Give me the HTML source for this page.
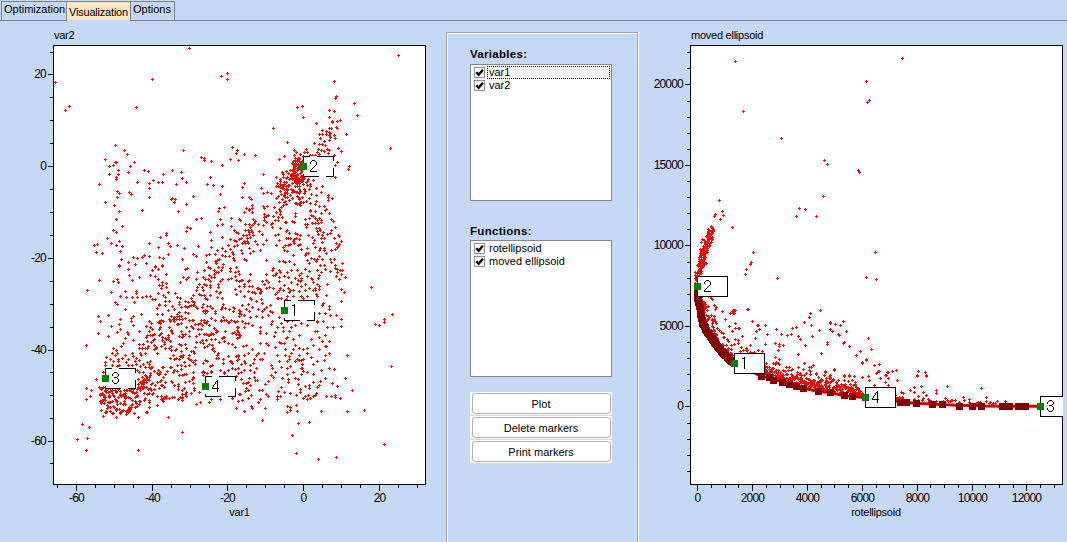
<!DOCTYPE html>
<html><head><meta charset="utf-8"><style>
html,body{margin:0;padding:0;}
body{width:1067px;height:542px;overflow:hidden;position:relative;background:#c5d9f6;font-family:"Liberation Sans",sans-serif;font-size:11px;color:#000}
.t{position:absolute;white-space:nowrap;line-height:13px}
svg.main{position:absolute;left:0;top:0}
</style></head><body>
<div style="position:absolute;left:0px;top:20px;width:1067px;height:1px;background:#808080"></div>
<div style="position:absolute;left:1px;top:1px;width:66px;height:20px;border:1px solid #808080;box-sizing:border-box;background:#c5d9f6"></div>
<div style="position:absolute;left:67px;top:1px;width:63px;height:19px;background:#fde6c6;border-top:1px solid #808080;box-sizing:border-box"></div>
<div style="position:absolute;left:67px;top:20px;width:63px;height:1px;background:#c5d9f6"></div>
<div style="position:absolute;left:130px;top:1px;width:45px;height:20px;border:1px solid #808080;box-sizing:border-box;background:#c5d9f6"></div>
<div class="t" style="left:4px;top:3px;">Optimization</div>
<div class="t" style="left:69px;top:6px;letter-spacing:-0.2px">Visualization</div>
<div class="t" style="left:133px;top:3px;">Options</div>
<div style="position:absolute;left:446px;top:32px;width:1px;height:520px;background:#a0a0a0"></div>
<div style="position:absolute;left:446px;top:32px;width:192px;height:1px;background:#a0a0a0"></div>
<div style="position:absolute;left:447px;top:33px;width:1px;height:520px;background:#fff"></div>
<div style="position:absolute;left:447px;top:33px;width:190px;height:1px;background:#fff"></div>
<div style="position:absolute;left:637px;top:32px;width:1px;height:520px;background:#a0a0a0"></div>
<div style="position:absolute;left:638px;top:32px;width:1px;height:520px;background:#fff"></div>
<div class="t" style="left:470px;top:48px;font-size:11.5px;letter-spacing:0.3px"><b>Variables:</b></div>
<div style="position:absolute;left:470px;top:64px;width:142px;height:137px;background:#fff;border:1px solid #828790;box-sizing:border-box"></div>
<div class="t" style="left:470px;top:225px;font-size:11.5px;letter-spacing:0.3px"><b>Functions:</b></div>
<div style="position:absolute;left:470px;top:240px;width:142px;height:137px;background:#fff;border:1px solid #828790;box-sizing:border-box"></div>
<div style="position:absolute;left:474px;top:67px;width:11px;height:11px;border:1px solid #8f8f8f;box-sizing:border-box;background:#fff"></div>
<svg style="position:absolute;left:474px;top:67px" width="11" height="11"><path d="M2.3 5.2 L4.7 7.8 L8.9 2.8" stroke="#000" stroke-width="2.4" fill="none"/></svg>
<div class="t" style="left:489px;top:66px;">var1</div>
<div style="position:absolute;left:474px;top:80px;width:11px;height:11px;border:1px solid #8f8f8f;box-sizing:border-box;background:#fff"></div>
<svg style="position:absolute;left:474px;top:80px" width="11" height="11"><path d="M2.3 5.2 L4.7 7.8 L8.9 2.8" stroke="#000" stroke-width="2.4" fill="none"/></svg>
<div class="t" style="left:489px;top:79px;">var2</div>
<div style="position:absolute;left:487px;top:66px;width:123px;height:13px;border:1px dotted #000;box-sizing:border-box"></div>
<div style="position:absolute;left:474px;top:243px;width:11px;height:11px;border:1px solid #8f8f8f;box-sizing:border-box;background:#fff"></div>
<svg style="position:absolute;left:474px;top:243px" width="11" height="11"><path d="M2.3 5.2 L4.7 7.8 L8.9 2.8" stroke="#000" stroke-width="2.4" fill="none"/></svg>
<div class="t" style="left:489px;top:242px;">rotellipsoid</div>
<div style="position:absolute;left:474px;top:256px;width:11px;height:11px;border:1px solid #8f8f8f;box-sizing:border-box;background:#fff"></div>
<svg style="position:absolute;left:474px;top:256px" width="11" height="11"><path d="M2.3 5.2 L4.7 7.8 L8.9 2.8" stroke="#000" stroke-width="2.4" fill="none"/></svg>
<div class="t" style="left:489px;top:255px;">moved ellipsoid</div>
<div style="position:absolute;left:470px;top:392px;width:142px;height:23px;background:#fff"></div>
<div style="position:absolute;left:472px;top:393px;width:139px;height:21px;border:1px solid #b0b0b0;border-radius:3px;box-sizing:border-box;background:#fff"></div>
<div class="t" style="left:470px;top:398px;width:142px;text-align:center">Plot</div>
<div style="position:absolute;left:470px;top:416px;width:142px;height:23px;background:#fff"></div>
<div style="position:absolute;left:472px;top:417px;width:139px;height:21px;border:1px solid #b0b0b0;border-radius:3px;box-sizing:border-box;background:#fff"></div>
<div class="t" style="left:470px;top:422px;width:142px;text-align:center">Delete markers</div>
<div style="position:absolute;left:470px;top:440px;width:142px;height:23px;background:#fff"></div>
<div style="position:absolute;left:472px;top:441px;width:139px;height:21px;border:1px solid #b0b0b0;border-radius:3px;box-sizing:border-box;background:#fff"></div>
<div class="t" style="left:470px;top:446px;width:142px;text-align:center">Print markers</div>
<div class="t" style="left:-74px;top:435px;width:120px;text-align:right;font-size:12px;letter-spacing:-0.8px">-60</div>
<div class="t" style="left:-74px;top:344px;width:120px;text-align:right;font-size:12px;letter-spacing:-0.8px">-40</div>
<div class="t" style="left:-74px;top:252px;width:120px;text-align:right;font-size:12px;letter-spacing:-0.8px">-20</div>
<div class="t" style="left:-74px;top:160px;width:120px;text-align:right;font-size:12px;letter-spacing:-0.8px">0</div>
<div class="t" style="left:-74px;top:68px;width:120px;text-align:right;font-size:12px;letter-spacing:-0.8px">20</div>
<div class="t" style="left:16.5px;top:492px;width:120px;text-align:center;font-size:12px;letter-spacing:-0.8px">-60</div>
<div class="t" style="left:92.5px;top:492px;width:120px;text-align:center;font-size:12px;letter-spacing:-0.8px">-40</div>
<div class="t" style="left:167.5px;top:492px;width:120px;text-align:center;font-size:12px;letter-spacing:-0.8px">-20</div>
<div class="t" style="left:243.5px;top:492px;width:120px;text-align:center;font-size:12px;letter-spacing:-0.8px">0</div>
<div class="t" style="left:319.5px;top:492px;width:120px;text-align:center;font-size:12px;letter-spacing:-0.8px">20</div>
<div class="t" style="left:54px;top:29px;font-size:11px;letter-spacing:-0.25px">var2</div>
<div class="t" style="left:179.5px;top:506px;width:120px;text-align:center;font-size:11px;letter-spacing:-0.25px">var1</div>
<div class="t" style="left:563px;top:400px;width:120px;text-align:right;font-size:12px;letter-spacing:-0.8px">0</div>
<div class="t" style="left:563px;top:320px;width:120px;text-align:right;font-size:12px;letter-spacing:-0.8px">5000</div>
<div class="t" style="left:563px;top:239px;width:120px;text-align:right;font-size:12px;letter-spacing:-0.8px">10000</div>
<div class="t" style="left:563px;top:159px;width:120px;text-align:right;font-size:12px;letter-spacing:-0.8px">15000</div>
<div class="t" style="left:563px;top:78px;width:120px;text-align:right;font-size:12px;letter-spacing:-0.8px">20000</div>
<div class="t" style="left:637.5px;top:492px;width:120px;text-align:center;font-size:12px;letter-spacing:-0.8px">0</div>
<div class="t" style="left:692.5px;top:492px;width:120px;text-align:center;font-size:12px;letter-spacing:-0.8px">2000</div>
<div class="t" style="left:747.5px;top:492px;width:120px;text-align:center;font-size:12px;letter-spacing:-0.8px">4000</div>
<div class="t" style="left:802.5px;top:492px;width:120px;text-align:center;font-size:12px;letter-spacing:-0.8px">6000</div>
<div class="t" style="left:857.5px;top:492px;width:120px;text-align:center;font-size:12px;letter-spacing:-0.8px">8000</div>
<div class="t" style="left:912.5px;top:492px;width:120px;text-align:center;font-size:12px;letter-spacing:-0.8px">10000</div>
<div class="t" style="left:966.5px;top:492px;width:120px;text-align:center;font-size:12px;letter-spacing:-0.8px">12000</div>
<div class="t" style="left:691px;top:29px;font-size:11px;letter-spacing:-0.25px">moved ellipsoid</div>
<div class="t" style="left:816px;top:506px;width:120px;text-align:center;font-size:11px;letter-spacing:-0.25px">rotellipsoid</div>
<svg class="main" width="1067" height="542" shape-rendering="crispEdges"><defs><clipPath id="rclip"><rect x="690" y="45" width="373" height="440"/></clipPath></defs>
<rect x="53" y="45" width="373" height="440" fill="#fff"/>
<rect x="690" y="45" width="373" height="440" fill="#fff"/>
<rect x="50" y="463" width="3" height="1" fill="#000"/>
<rect x="48" y="441" width="5" height="1" fill="#000"/>
<rect x="50" y="418" width="3" height="1" fill="#000"/>
<rect x="50" y="395" width="3" height="1" fill="#000"/>
<rect x="50" y="372" width="3" height="1" fill="#000"/>
<rect x="48" y="350" width="5" height="1" fill="#000"/>
<rect x="50" y="327" width="3" height="1" fill="#000"/>
<rect x="50" y="304" width="3" height="1" fill="#000"/>
<rect x="50" y="281" width="3" height="1" fill="#000"/>
<rect x="48" y="258" width="5" height="1" fill="#000"/>
<rect x="50" y="235" width="3" height="1" fill="#000"/>
<rect x="50" y="212" width="3" height="1" fill="#000"/>
<rect x="50" y="189" width="3" height="1" fill="#000"/>
<rect x="48" y="166" width="5" height="1" fill="#000"/>
<rect x="50" y="143" width="3" height="1" fill="#000"/>
<rect x="50" y="120" width="3" height="1" fill="#000"/>
<rect x="50" y="97" width="3" height="1" fill="#000"/>
<rect x="48" y="74" width="5" height="1" fill="#000"/>
<rect x="50" y="52" width="3" height="1" fill="#000"/>
<rect x="57" y="485" width="1" height="3" fill="#000"/>
<rect x="76" y="485" width="1" height="6" fill="#000"/>
<rect x="95" y="485" width="1" height="3" fill="#000"/>
<rect x="114" y="485" width="1" height="3" fill="#000"/>
<rect x="133" y="485" width="1" height="3" fill="#000"/>
<rect x="152" y="485" width="1" height="6" fill="#000"/>
<rect x="171" y="485" width="1" height="3" fill="#000"/>
<rect x="190" y="485" width="1" height="3" fill="#000"/>
<rect x="209" y="485" width="1" height="3" fill="#000"/>
<rect x="227" y="485" width="1" height="6" fill="#000"/>
<rect x="246" y="485" width="1" height="3" fill="#000"/>
<rect x="265" y="485" width="1" height="3" fill="#000"/>
<rect x="284" y="485" width="1" height="3" fill="#000"/>
<rect x="303" y="485" width="1" height="6" fill="#000"/>
<rect x="322" y="485" width="1" height="3" fill="#000"/>
<rect x="341" y="485" width="1" height="3" fill="#000"/>
<rect x="360" y="485" width="1" height="3" fill="#000"/>
<rect x="379" y="485" width="1" height="6" fill="#000"/>
<rect x="398" y="485" width="1" height="3" fill="#000"/>
<rect x="417" y="485" width="1" height="3" fill="#000"/>
<rect x="687" y="471" width="3" height="1" fill="#000"/>
<rect x="687" y="455" width="3" height="1" fill="#000"/>
<rect x="687" y="439" width="3" height="1" fill="#000"/>
<rect x="687" y="423" width="3" height="1" fill="#000"/>
<rect x="685" y="406" width="5" height="1" fill="#000"/>
<rect x="687" y="390" width="3" height="1" fill="#000"/>
<rect x="687" y="374" width="3" height="1" fill="#000"/>
<rect x="687" y="358" width="3" height="1" fill="#000"/>
<rect x="687" y="342" width="3" height="1" fill="#000"/>
<rect x="685" y="326" width="5" height="1" fill="#000"/>
<rect x="687" y="310" width="3" height="1" fill="#000"/>
<rect x="687" y="294" width="3" height="1" fill="#000"/>
<rect x="687" y="278" width="3" height="1" fill="#000"/>
<rect x="687" y="262" width="3" height="1" fill="#000"/>
<rect x="685" y="245" width="5" height="1" fill="#000"/>
<rect x="687" y="229" width="3" height="1" fill="#000"/>
<rect x="687" y="213" width="3" height="1" fill="#000"/>
<rect x="687" y="197" width="3" height="1" fill="#000"/>
<rect x="687" y="181" width="3" height="1" fill="#000"/>
<rect x="685" y="165" width="5" height="1" fill="#000"/>
<rect x="687" y="149" width="3" height="1" fill="#000"/>
<rect x="687" y="133" width="3" height="1" fill="#000"/>
<rect x="687" y="117" width="3" height="1" fill="#000"/>
<rect x="687" y="101" width="3" height="1" fill="#000"/>
<rect x="685" y="84" width="5" height="1" fill="#000"/>
<rect x="687" y="68" width="3" height="1" fill="#000"/>
<rect x="687" y="52" width="3" height="1" fill="#000"/>
<rect x="697" y="485" width="1" height="6" fill="#000"/>
<rect x="711" y="485" width="1" height="3" fill="#000"/>
<rect x="725" y="485" width="1" height="3" fill="#000"/>
<rect x="738" y="485" width="1" height="3" fill="#000"/>
<rect x="752" y="485" width="1" height="6" fill="#000"/>
<rect x="766" y="485" width="1" height="3" fill="#000"/>
<rect x="780" y="485" width="1" height="3" fill="#000"/>
<rect x="793" y="485" width="1" height="3" fill="#000"/>
<rect x="807" y="485" width="1" height="6" fill="#000"/>
<rect x="821" y="485" width="1" height="3" fill="#000"/>
<rect x="834" y="485" width="1" height="3" fill="#000"/>
<rect x="848" y="485" width="1" height="3" fill="#000"/>
<rect x="862" y="485" width="1" height="6" fill="#000"/>
<rect x="876" y="485" width="1" height="3" fill="#000"/>
<rect x="889" y="485" width="1" height="3" fill="#000"/>
<rect x="903" y="485" width="1" height="3" fill="#000"/>
<rect x="917" y="485" width="1" height="6" fill="#000"/>
<rect x="930" y="485" width="1" height="3" fill="#000"/>
<rect x="944" y="485" width="1" height="3" fill="#000"/>
<rect x="958" y="485" width="1" height="3" fill="#000"/>
<rect x="972" y="485" width="1" height="6" fill="#000"/>
<rect x="985" y="485" width="1" height="3" fill="#000"/>
<rect x="999" y="485" width="1" height="3" fill="#000"/>
<rect x="1013" y="485" width="1" height="3" fill="#000"/>
<rect x="1026" y="485" width="1" height="6" fill="#000"/>
<rect x="1040" y="485" width="1" height="3" fill="#000"/>
<rect x="1054" y="485" width="1" height="3" fill="#000"/>
<path fill="#f00" d="M54 82h3v1h-3zM55 81h1v3h-1zM64 110h3v1h-3zM65 109h1v3h-1zM68 106h3v1h-3zM69 105h1v3h-1zM135 107h3v1h-3zM136 106h1v3h-1zM114 145h3v1h-3zM115 144h1v3h-1zM123 150h3v1h-3zM124 149h1v3h-1zM126 154h3v1h-3zM127 153h1v3h-1zM188 48h3v1h-3zM189 47h1v3h-1zM151 79h3v1h-3zM152 78h1v3h-1zM220 76h3v1h-3zM221 75h1v3h-1zM226 73h3v1h-3zM227 72h1v3h-1zM226 79h3v1h-3zM227 78h1v3h-1zM182 150h3v1h-3zM183 149h1v3h-1zM231 147h3v1h-3zM232 146h1v3h-1zM236 150h3v1h-3zM237 149h1v3h-1zM235 153h3v1h-3zM236 152h1v3h-1zM296 107h3v1h-3zM297 106h1v3h-1zM301 106h3v1h-3zM302 105h1v3h-1zM302 117h3v1h-3zM303 116h1v3h-1zM328 110h3v1h-3zM329 109h1v3h-1zM328 117h3v1h-3zM329 116h1v3h-1zM315 123h3v1h-3zM316 122h1v3h-1zM272 128h3v1h-3zM273 127h1v3h-1zM286 142h3v1h-3zM287 141h1v3h-1zM243 154h3v1h-3zM244 153h1v3h-1zM254 155h3v1h-3zM255 154h1v3h-1zM331 121h3v1h-3zM332 120h1v3h-1zM397 55h3v1h-3zM398 54h1v3h-1zM333 81h3v1h-3zM334 80h1v3h-1zM335 96h3v1h-3zM336 95h1v3h-1zM334 98h3v1h-3zM335 97h1v3h-1zM353 103h3v1h-3zM354 102h1v3h-1zM333 111h3v1h-3zM334 110h1v3h-1zM356 115h3v1h-3zM357 114h1v3h-1zM336 121h3v1h-3zM337 120h1v3h-1zM339 120h3v1h-3zM340 119h1v3h-1zM335 127h3v1h-3zM336 126h1v3h-1zM336 128h3v1h-3zM337 127h1v3h-1zM333 135h3v1h-3zM334 134h1v3h-1zM334 138h3v1h-3zM335 137h1v3h-1zM345 134h3v1h-3zM346 133h1v3h-1zM337 148h3v1h-3zM338 147h1v3h-1zM340 151h3v1h-3zM341 150h1v3h-1zM389 148h3v1h-3zM390 147h1v3h-1zM333 155h3v1h-3zM334 154h1v3h-1zM104 159h3v1h-3zM105 158h1v3h-1zM108 166h3v1h-3zM109 165h1v3h-1zM112 165h3v1h-3zM113 164h1v3h-1zM114 162h3v1h-3zM115 161h1v3h-1zM115 162h3v1h-3zM116 161h1v3h-1zM129 166h3v1h-3zM130 165h1v3h-1zM133 162h3v1h-3zM134 161h1v3h-1zM117 170h3v1h-3zM118 169h1v3h-1zM108 174h3v1h-3zM109 173h1v3h-1zM117 174h3v1h-3zM118 173h1v3h-1zM127 172h3v1h-3zM128 171h1v3h-1zM143 170h3v1h-3zM144 169h1v3h-1zM115 177h3v1h-3zM116 176h1v3h-1zM115 179h3v1h-3zM116 178h1v3h-1zM98 184h3v1h-3zM99 183h1v3h-1zM136 182h3v1h-3zM137 181h1v3h-1zM116 191h3v1h-3zM117 190h1v3h-1zM118 193h3v1h-3zM119 192h1v3h-1zM128 192h3v1h-3zM129 191h1v3h-1zM130 194h3v1h-3zM131 193h1v3h-1zM116 197h3v1h-3zM117 196h1v3h-1zM104 202h3v1h-3zM105 201h1v3h-1zM113 205h3v1h-3zM114 204h1v3h-1zM118 211h3v1h-3zM119 210h1v3h-1zM141 210h3v1h-3zM142 209h1v3h-1zM115 219h3v1h-3zM116 218h1v3h-1zM121 226h3v1h-3zM122 225h1v3h-1zM112 230h3v1h-3zM113 229h1v3h-1zM115 232h3v1h-3zM116 231h1v3h-1zM106 238h3v1h-3zM107 237h1v3h-1zM110 243h3v1h-3zM111 242h1v3h-1zM118 241h3v1h-3zM119 240h1v3h-1zM96 244h3v1h-3zM97 243h1v3h-1zM93 245h3v1h-3zM94 244h1v3h-1zM115 245h3v1h-3zM116 244h1v3h-1zM121 246h3v1h-3zM122 245h1v3h-1zM95 252h3v1h-3zM96 251h1v3h-1zM101 253h3v1h-3zM102 252h1v3h-1zM119 251h3v1h-3zM120 250h1v3h-1zM120 259h3v1h-3zM121 258h1v3h-1zM132 257h3v1h-3zM133 256h1v3h-1zM136 258h3v1h-3zM137 257h1v3h-1zM141 257h3v1h-3zM142 256h1v3h-1zM143 255h3v1h-3zM144 254h1v3h-1zM127 262h3v1h-3zM128 261h1v3h-1zM134 264h3v1h-3zM135 263h1v3h-1zM118 265h3v1h-3zM119 264h1v3h-1zM145 263h3v1h-3zM146 262h1v3h-1zM200 157h3v1h-3zM201 156h1v3h-1zM203 158h3v1h-3zM204 157h1v3h-1zM203 160h3v1h-3zM204 159h1v3h-1zM210 161h3v1h-3zM211 160h1v3h-1zM229 159h3v1h-3zM230 158h1v3h-1zM237 160h3v1h-3zM238 159h1v3h-1zM221 165h3v1h-3zM222 164h1v3h-1zM147 171h3v1h-3zM148 170h1v3h-1zM171 170h3v1h-3zM172 169h1v3h-1zM180 172h3v1h-3zM181 171h1v3h-1zM162 174h3v1h-3zM163 173h1v3h-1zM209 177h3v1h-3zM210 176h1v3h-1zM181 178h3v1h-3zM182 177h1v3h-1zM152 180h3v1h-3zM153 179h1v3h-1zM157 182h3v1h-3zM158 181h1v3h-1zM161 182h3v1h-3zM162 181h1v3h-1zM148 183h3v1h-3zM149 182h1v3h-1zM175 184h3v1h-3zM176 183h1v3h-1zM185 182h3v1h-3zM186 181h1v3h-1zM206 184h3v1h-3zM207 183h1v3h-1zM212 185h3v1h-3zM213 184h1v3h-1zM221 186h3v1h-3zM222 185h1v3h-1zM148 188h3v1h-3zM149 187h1v3h-1zM219 194h3v1h-3zM220 193h1v3h-1zM148 197h3v1h-3zM149 196h1v3h-1zM192 196h3v1h-3zM193 195h1v3h-1zM170 199h3v1h-3zM171 198h1v3h-1zM171 198h3v1h-3zM172 197h1v3h-1zM174 199h3v1h-3zM175 198h1v3h-1zM173 202h3v1h-3zM174 201h1v3h-1zM185 204h3v1h-3zM186 203h1v3h-1zM218 208h3v1h-3zM219 207h1v3h-1zM223 207h3v1h-3zM224 206h1v3h-1zM217 211h3v1h-3zM218 210h1v3h-1zM177 211h3v1h-3zM178 210h1v3h-1zM195 219h3v1h-3zM196 218h1v3h-1zM200 218h3v1h-3zM201 217h1v3h-1zM219 219h3v1h-3zM220 218h1v3h-1zM230 218h3v1h-3zM231 217h1v3h-1zM238 219h3v1h-3zM239 218h1v3h-1zM216 225h3v1h-3zM217 224h1v3h-1zM221 224h3v1h-3zM222 223h1v3h-1zM230 226h3v1h-3zM231 225h1v3h-1zM186 227h3v1h-3zM187 226h1v3h-1zM189 228h3v1h-3zM190 227h1v3h-1zM185 231h3v1h-3zM186 230h1v3h-1zM233 230h3v1h-3zM234 229h1v3h-1zM235 232h3v1h-3zM236 231h1v3h-1zM237 233h3v1h-3zM238 232h1v3h-1zM209 232h3v1h-3zM210 231h1v3h-1zM165 233h3v1h-3zM166 232h1v3h-1zM165 235h3v1h-3zM166 234h1v3h-1zM159 237h3v1h-3zM160 236h1v3h-1zM221 237h3v1h-3zM222 236h1v3h-1zM229 239h3v1h-3zM230 238h1v3h-1zM233 240h3v1h-3zM234 239h1v3h-1zM235 241h3v1h-3zM236 240h1v3h-1zM238 239h3v1h-3zM239 238h1v3h-1zM148 243h3v1h-3zM149 242h1v3h-1zM167 243h3v1h-3zM168 242h1v3h-1zM210 240h3v1h-3zM211 239h1v3h-1zM169 246h3v1h-3zM170 245h1v3h-1zM176 245h3v1h-3zM177 244h1v3h-1zM197 246h3v1h-3zM198 245h1v3h-1zM157 247h3v1h-3zM158 246h1v3h-1zM183 248h3v1h-3zM184 247h1v3h-1zM210 247h3v1h-3zM211 246h1v3h-1zM227 245h3v1h-3zM228 244h1v3h-1zM233 246h3v1h-3zM234 245h1v3h-1zM236 245h3v1h-3zM237 244h1v3h-1zM221 248h3v1h-3zM222 247h1v3h-1zM229 249h3v1h-3zM230 248h1v3h-1zM216 250h3v1h-3zM217 249h1v3h-1zM224 251h3v1h-3zM225 250h1v3h-1zM231 252h3v1h-3zM232 251h1v3h-1zM232 254h3v1h-3zM233 253h1v3h-1zM148 256h3v1h-3zM149 255h1v3h-1zM167 254h3v1h-3zM168 253h1v3h-1zM192 254h3v1h-3zM193 253h1v3h-1zM195 256h3v1h-3zM196 255h1v3h-1zM205 255h3v1h-3zM206 254h1v3h-1zM208 254h3v1h-3zM209 253h1v3h-1zM214 254h3v1h-3zM215 253h1v3h-1zM221 255h3v1h-3zM222 254h1v3h-1zM224 256h3v1h-3zM225 255h1v3h-1zM228 256h3v1h-3zM229 255h1v3h-1zM232 258h3v1h-3zM233 257h1v3h-1zM233 260h3v1h-3zM234 259h1v3h-1zM158 257h3v1h-3zM159 256h1v3h-1zM162 258h3v1h-3zM163 257h1v3h-1zM181 259h3v1h-3zM182 258h1v3h-1zM205 262h3v1h-3zM206 261h1v3h-1zM214 261h3v1h-3zM215 260h1v3h-1zM216 260h3v1h-3zM217 259h1v3h-1zM218 259h3v1h-3zM219 258h1v3h-1zM215 263h3v1h-3zM216 262h1v3h-1zM222 264h3v1h-3zM223 263h1v3h-1zM161 265h3v1h-3zM162 264h1v3h-1zM154 266h3v1h-3zM155 265h1v3h-1zM278 159h3v1h-3zM279 158h1v3h-1zM283 156h3v1h-3zM284 155h1v3h-1zM262 174h3v1h-3zM263 173h1v3h-1zM243 183h3v1h-3zM244 182h1v3h-1zM241 187h3v1h-3zM242 186h1v3h-1zM260 188h3v1h-3zM261 187h1v3h-1zM262 193h3v1h-3zM263 192h1v3h-1zM266 192h3v1h-3zM267 191h1v3h-1zM270 193h3v1h-3zM271 192h1v3h-1zM241 197h3v1h-3zM242 196h1v3h-1zM248 197h3v1h-3zM249 196h1v3h-1zM250 199h3v1h-3zM251 198h1v3h-1zM251 205h3v1h-3zM252 204h1v3h-1zM245 208h3v1h-3zM246 207h1v3h-1zM248 209h3v1h-3zM249 208h1v3h-1zM251 208h3v1h-3zM252 207h1v3h-1zM262 206h3v1h-3zM263 205h1v3h-1zM263 208h3v1h-3zM264 207h1v3h-1zM266 206h3v1h-3zM267 205h1v3h-1zM273 207h3v1h-3zM274 206h1v3h-1zM281 172h3v1h-3zM282 171h1v3h-1zM282 174h3v1h-3zM283 173h1v3h-1zM285 171h3v1h-3zM286 170h1v3h-1zM275 177h3v1h-3zM276 176h1v3h-1zM279 179h3v1h-3zM280 178h1v3h-1zM282 177h3v1h-3zM283 176h1v3h-1zM285 178h3v1h-3zM286 177h1v3h-1zM279 181h3v1h-3zM280 180h1v3h-1zM276 183h3v1h-3zM277 182h1v3h-1zM283 182h3v1h-3zM284 181h1v3h-1zM279 184h3v1h-3zM280 183h1v3h-1zM275 186h3v1h-3zM276 185h1v3h-1zM277 186h3v1h-3zM278 185h1v3h-1zM279 187h3v1h-3zM280 186h1v3h-1zM281 185h3v1h-3zM282 184h1v3h-1zM281 188h3v1h-3zM282 187h1v3h-1zM283 189h3v1h-3zM284 188h1v3h-1zM279 191h3v1h-3zM280 190h1v3h-1zM284 192h3v1h-3zM285 191h1v3h-1zM277 196h3v1h-3zM278 195h1v3h-1zM280 194h3v1h-3zM281 193h1v3h-1zM283 195h3v1h-3zM284 194h1v3h-1zM275 198h3v1h-3zM276 197h1v3h-1zM281 199h3v1h-3zM282 198h1v3h-1zM284 197h3v1h-3zM285 196h1v3h-1zM278 202h3v1h-3zM279 201h1v3h-1zM283 202h3v1h-3zM284 201h1v3h-1zM282 205h3v1h-3zM283 204h1v3h-1zM280 207h3v1h-3zM281 206h1v3h-1zM278 209h3v1h-3zM279 208h1v3h-1zM285 204h3v1h-3zM286 203h1v3h-1zM284 201h3v1h-3zM285 200h1v3h-1zM285 186h3v1h-3zM286 185h1v3h-1zM283 184h3v1h-3zM284 183h1v3h-1zM312 180h3v1h-3zM313 179h1v3h-1zM321 186h3v1h-3zM322 185h1v3h-1zM315 188h3v1h-3zM316 187h1v3h-1zM320 192h3v1h-3zM321 191h1v3h-1zM327 195h3v1h-3zM328 194h1v3h-1zM327 197h3v1h-3zM328 196h1v3h-1zM331 198h3v1h-3zM332 197h1v3h-1zM327 200h3v1h-3zM328 199h1v3h-1zM315 201h3v1h-3zM316 200h1v3h-1zM323 206h3v1h-3zM324 205h1v3h-1zM318 206h3v1h-3zM319 205h1v3h-1zM325 209h3v1h-3zM326 208h1v3h-1zM314 204h3v1h-3zM315 203h1v3h-1zM309 203h3v1h-3zM310 202h1v3h-1zM315 195h3v1h-3zM316 194h1v3h-1zM310 194h3v1h-3zM311 193h1v3h-1zM308 198h3v1h-3zM309 197h1v3h-1zM305 201h3v1h-3zM306 200h1v3h-1zM300 202h3v1h-3zM301 201h1v3h-1zM297 197h3v1h-3zM298 196h1v3h-1zM291 198h3v1h-3zM292 197h1v3h-1zM289 195h3v1h-3zM290 194h1v3h-1zM288 200h3v1h-3zM289 199h1v3h-1zM286 193h3v1h-3zM287 192h1v3h-1zM293 191h3v1h-3zM294 190h1v3h-1zM298 193h3v1h-3zM299 192h1v3h-1zM303 189h3v1h-3zM304 188h1v3h-1zM306 185h3v1h-3zM307 184h1v3h-1zM309 186h3v1h-3zM310 185h1v3h-1zM302 184h3v1h-3zM303 183h1v3h-1zM300 181h3v1h-3zM301 180h1v3h-1zM295 181h3v1h-3zM296 180h1v3h-1zM291 183h3v1h-3zM292 182h1v3h-1zM287 185h3v1h-3zM288 184h1v3h-1zM309 210h3v1h-3zM310 209h1v3h-1zM305 182h3v1h-3zM306 181h1v3h-1zM307 179h3v1h-3zM308 178h1v3h-1zM298 186h3v1h-3zM299 185h1v3h-1zM294 186h3v1h-3zM295 185h1v3h-1zM290 189h3v1h-3zM291 188h1v3h-1zM288 179h3v1h-3zM289 178h1v3h-1zM285 182h3v1h-3zM286 181h1v3h-1zM301 197h3v1h-3zM302 196h1v3h-1zM296 204h3v1h-3zM297 203h1v3h-1zM299 205h3v1h-3zM300 204h1v3h-1zM291 175h3v1h-3zM292 174h1v3h-1zM287 173h3v1h-3zM288 172h1v3h-1zM286 177h3v1h-3zM287 176h1v3h-1zM289 170h3v1h-3zM290 169h1v3h-1zM243 212h3v1h-3zM244 211h1v3h-1zM251 212h3v1h-3zM252 211h1v3h-1zM248 210h3v1h-3zM249 209h1v3h-1zM263 214h3v1h-3zM264 213h1v3h-1zM263 217h3v1h-3zM264 216h1v3h-1zM265 216h3v1h-3zM266 215h1v3h-1zM267 215h3v1h-3zM268 214h1v3h-1zM263 220h3v1h-3zM264 219h1v3h-1zM265 222h3v1h-3zM266 221h1v3h-1zM262 225h3v1h-3zM263 224h1v3h-1zM275 212h3v1h-3zM276 211h1v3h-1zM272 216h3v1h-3zM273 215h1v3h-1zM277 217h3v1h-3zM278 216h1v3h-1zM279 211h3v1h-3zM280 210h1v3h-1zM279 214h3v1h-3zM280 213h1v3h-1zM281 217h3v1h-3zM282 216h1v3h-1zM274 220h3v1h-3zM275 219h1v3h-1zM277 220h3v1h-3zM278 219h1v3h-1zM271 223h3v1h-3zM272 222h1v3h-1zM270 224h3v1h-3zM271 223h1v3h-1zM271 227h3v1h-3zM272 226h1v3h-1zM284 222h3v1h-3zM285 221h1v3h-1zM279 228h3v1h-3zM280 227h1v3h-1zM285 231h3v1h-3zM286 230h1v3h-1zM252 219h3v1h-3zM253 218h1v3h-1zM254 221h3v1h-3zM255 220h1v3h-1zM253 223h3v1h-3zM254 222h1v3h-1zM251 225h3v1h-3zM252 224h1v3h-1zM248 224h3v1h-3zM249 223h1v3h-1zM244 224h3v1h-3zM245 223h1v3h-1zM257 224h3v1h-3zM258 223h1v3h-1zM249 227h3v1h-3zM250 226h1v3h-1zM244 230h3v1h-3zM245 229h1v3h-1zM247 230h3v1h-3zM248 229h1v3h-1zM250 230h3v1h-3zM251 229h1v3h-1zM248 232h3v1h-3zM249 231h1v3h-1zM251 232h3v1h-3zM252 231h1v3h-1zM242 235h3v1h-3zM243 234h1v3h-1zM245 235h3v1h-3zM246 234h1v3h-1zM248 234h3v1h-3zM249 233h1v3h-1zM252 235h3v1h-3zM253 234h1v3h-1zM246 238h3v1h-3zM247 237h1v3h-1zM249 237h3v1h-3zM250 236h1v3h-1zM240 238h3v1h-3zM241 237h1v3h-1zM243 241h3v1h-3zM244 240h1v3h-1zM246 241h3v1h-3zM247 240h1v3h-1zM241 243h3v1h-3zM242 242h1v3h-1zM244 243h3v1h-3zM245 242h1v3h-1zM247 243h3v1h-3zM248 242h1v3h-1zM258 231h3v1h-3zM259 230h1v3h-1zM261 234h3v1h-3zM262 233h1v3h-1zM254 241h3v1h-3zM255 240h1v3h-1zM256 244h3v1h-3zM257 243h1v3h-1zM265 240h3v1h-3zM266 239h1v3h-1zM262 244h3v1h-3zM263 243h1v3h-1zM275 245h3v1h-3zM276 244h1v3h-1zM274 235h3v1h-3zM275 234h1v3h-1zM277 234h3v1h-3zM278 233h1v3h-1zM278 240h3v1h-3zM279 239h1v3h-1zM285 238h3v1h-3zM286 237h1v3h-1zM284 245h3v1h-3zM285 244h1v3h-1zM282 247h3v1h-3zM283 246h1v3h-1zM283 250h3v1h-3zM284 249h1v3h-1zM248 248h3v1h-3zM249 247h1v3h-1zM252 251h3v1h-3zM253 250h1v3h-1zM259 250h3v1h-3zM260 249h1v3h-1zM240 250h3v1h-3zM241 249h1v3h-1zM241 253h3v1h-3zM242 252h1v3h-1zM249 253h3v1h-3zM250 252h1v3h-1zM243 259h3v1h-3zM244 258h1v3h-1zM245 260h3v1h-3zM246 259h1v3h-1zM265 260h3v1h-3zM266 259h1v3h-1zM278 261h3v1h-3zM279 260h1v3h-1zM282 261h3v1h-3zM283 260h1v3h-1zM284 262h3v1h-3zM285 261h1v3h-1zM239 220h3v1h-3zM240 219h1v3h-1zM294 213h3v1h-3zM295 212h1v3h-1zM294 216h3v1h-3zM295 215h1v3h-1zM291 221h3v1h-3zM292 220h1v3h-1zM293 222h3v1h-3zM294 221h1v3h-1zM285 222h3v1h-3zM286 221h1v3h-1zM304 219h3v1h-3zM305 218h1v3h-1zM304 224h3v1h-3zM305 223h1v3h-1zM306 224h3v1h-3zM307 223h1v3h-1zM305 227h3v1h-3zM306 226h1v3h-1zM309 211h3v1h-3zM310 210h1v3h-1zM314 211h3v1h-3zM315 210h1v3h-1zM320 213h3v1h-3zM321 212h1v3h-1zM328 213h3v1h-3zM329 212h1v3h-1zM324 210h3v1h-3zM325 209h1v3h-1zM310 215h3v1h-3zM311 214h1v3h-1zM312 216h3v1h-3zM313 215h1v3h-1zM308 218h3v1h-3zM309 217h1v3h-1zM314 218h3v1h-3zM315 217h1v3h-1zM316 220h3v1h-3zM317 219h1v3h-1zM318 218h3v1h-3zM319 217h1v3h-1zM320 220h3v1h-3zM321 219h1v3h-1zM311 223h3v1h-3zM312 222h1v3h-1zM314 223h3v1h-3zM315 222h1v3h-1zM317 223h3v1h-3zM318 222h1v3h-1zM320 222h3v1h-3zM321 221h1v3h-1zM315 228h3v1h-3zM316 227h1v3h-1zM318 228h3v1h-3zM319 227h1v3h-1zM316 231h3v1h-3zM317 230h1v3h-1zM319 230h3v1h-3zM320 229h1v3h-1zM322 232h3v1h-3zM323 231h1v3h-1zM317 234h3v1h-3zM318 233h1v3h-1zM321 235h3v1h-3zM322 234h1v3h-1zM320 238h3v1h-3zM321 237h1v3h-1zM323 238h3v1h-3zM324 237h1v3h-1zM330 230h3v1h-3zM331 229h1v3h-1zM329 233h3v1h-3zM330 232h1v3h-1zM326 234h3v1h-3zM327 233h1v3h-1zM330 219h3v1h-3zM331 218h1v3h-1zM286 230h3v1h-3zM287 229h1v3h-1zM288 233h3v1h-3zM289 232h1v3h-1zM294 233h3v1h-3zM295 232h1v3h-1zM296 234h3v1h-3zM297 233h1v3h-1zM299 235h3v1h-3zM300 234h1v3h-1zM287 238h3v1h-3zM288 237h1v3h-1zM289 238h3v1h-3zM290 237h1v3h-1zM293 239h3v1h-3zM294 238h1v3h-1zM295 238h3v1h-3zM296 237h1v3h-1zM298 239h3v1h-3zM299 238h1v3h-1zM292 241h3v1h-3zM293 240h1v3h-1zM289 244h3v1h-3zM290 243h1v3h-1zM287 245h3v1h-3zM288 244h1v3h-1zM293 243h3v1h-3zM294 242h1v3h-1zM297 245h3v1h-3zM298 244h1v3h-1zM299 244h3v1h-3zM300 243h1v3h-1zM307 235h3v1h-3zM308 234h1v3h-1zM311 237h3v1h-3zM312 236h1v3h-1zM313 240h3v1h-3zM314 239h1v3h-1zM312 243h3v1h-3zM313 242h1v3h-1zM321 242h3v1h-3zM322 241h1v3h-1zM300 249h3v1h-3zM301 248h1v3h-1zM306 248h3v1h-3zM307 247h1v3h-1zM314 247h3v1h-3zM315 246h1v3h-1zM319 248h3v1h-3zM320 247h1v3h-1zM323 248h3v1h-3zM324 247h1v3h-1zM323 250h3v1h-3zM324 249h1v3h-1zM318 250h3v1h-3zM319 249h1v3h-1zM330 250h3v1h-3zM331 249h1v3h-1zM325 253h3v1h-3zM326 252h1v3h-1zM286 251h3v1h-3zM287 250h1v3h-1zM292 255h3v1h-3zM293 254h1v3h-1zM305 253h3v1h-3zM306 252h1v3h-1zM307 253h3v1h-3zM308 252h1v3h-1zM304 255h3v1h-3zM305 254h1v3h-1zM310 258h3v1h-3zM311 257h1v3h-1zM306 260h3v1h-3zM307 259h1v3h-1zM313 259h3v1h-3zM314 258h1v3h-1zM316 259h3v1h-3zM317 258h1v3h-1zM318 256h3v1h-3zM319 255h1v3h-1zM321 259h3v1h-3zM322 258h1v3h-1zM315 261h3v1h-3zM316 260h1v3h-1zM308 263h3v1h-3zM309 262h1v3h-1zM288 261h3v1h-3zM289 260h1v3h-1zM293 264h3v1h-3zM294 263h1v3h-1zM329 259h3v1h-3zM330 258h1v3h-1zM330 262h3v1h-3zM331 261h1v3h-1zM319 265h3v1h-3zM320 264h1v3h-1zM323 265h3v1h-3zM324 264h1v3h-1zM334 165h3v1h-3zM335 164h1v3h-1zM336 162h3v1h-3zM337 161h1v3h-1zM348 166h3v1h-3zM349 165h1v3h-1zM347 169h3v1h-3zM348 168h1v3h-1zM334 177h3v1h-3zM335 176h1v3h-1zM332 221h3v1h-3zM333 220h1v3h-1zM334 227h3v1h-3zM335 226h1v3h-1zM337 235h3v1h-3zM338 234h1v3h-1zM338 236h3v1h-3zM339 235h1v3h-1zM333 238h3v1h-3zM334 237h1v3h-1zM335 243h3v1h-3zM336 242h1v3h-1zM340 241h3v1h-3zM341 240h1v3h-1zM338 244h3v1h-3zM339 243h1v3h-1zM337 246h3v1h-3zM338 245h1v3h-1zM336 247h3v1h-3zM337 246h1v3h-1zM334 249h3v1h-3zM335 248h1v3h-1zM333 259h3v1h-3zM334 258h1v3h-1zM341 263h3v1h-3zM342 262h1v3h-1zM334 265h3v1h-3zM335 264h1v3h-1zM118 266h3v1h-3zM119 265h1v3h-1zM127 269h3v1h-3zM128 268h1v3h-1zM128 275h3v1h-3zM129 274h1v3h-1zM138 277h3v1h-3zM139 276h1v3h-1zM98 280h3v1h-3zM99 279h1v3h-1zM112 281h3v1h-3zM113 280h1v3h-1zM116 279h3v1h-3zM117 278h1v3h-1zM117 282h3v1h-3zM118 281h1v3h-1zM131 280h3v1h-3zM132 279h1v3h-1zM86 290h3v1h-3zM87 289h1v3h-1zM110 292h3v1h-3zM111 291h1v3h-1zM124 291h3v1h-3zM125 290h1v3h-1zM135 291h3v1h-3zM136 290h1v3h-1zM135 293h3v1h-3zM136 292h1v3h-1zM119 296h3v1h-3zM120 295h1v3h-1zM125 297h3v1h-3zM126 296h1v3h-1zM131 297h3v1h-3zM132 296h1v3h-1zM136 297h3v1h-3zM137 296h1v3h-1zM141 297h3v1h-3zM142 296h1v3h-1zM145 296h3v1h-3zM146 295h1v3h-1zM114 302h3v1h-3zM115 301h1v3h-1zM116 304h3v1h-3zM117 303h1v3h-1zM133 302h3v1h-3zM134 301h1v3h-1zM124 309h3v1h-3zM125 308h1v3h-1zM97 316h3v1h-3zM98 315h1v3h-1zM107 315h3v1h-3zM108 314h1v3h-1zM99 321h3v1h-3zM100 320h1v3h-1zM132 316h3v1h-3zM133 315h1v3h-1zM130 318h3v1h-3zM131 317h1v3h-1zM130 321h3v1h-3zM131 320h1v3h-1zM140 314h3v1h-3zM141 313h1v3h-1zM119 319h3v1h-3zM120 318h1v3h-1zM118 324h3v1h-3zM119 323h1v3h-1zM110 326h3v1h-3zM111 325h1v3h-1zM132 325h3v1h-3zM133 324h1v3h-1zM145 326h3v1h-3zM146 325h1v3h-1zM119 329h3v1h-3zM120 328h1v3h-1zM116 332h3v1h-3zM117 331h1v3h-1zM126 332h3v1h-3zM127 331h1v3h-1zM127 334h3v1h-3zM128 333h1v3h-1zM138 331h3v1h-3zM139 330h1v3h-1zM97 333h3v1h-3zM98 332h1v3h-1zM107 336h3v1h-3zM108 335h1v3h-1zM124 338h3v1h-3zM125 337h1v3h-1zM132 340h3v1h-3zM133 339h1v3h-1zM145 337h3v1h-3zM146 336h1v3h-1zM85 345h3v1h-3zM86 344h1v3h-1zM122 343h3v1h-3zM123 342h1v3h-1zM120 346h3v1h-3zM121 345h1v3h-1zM138 344h3v1h-3zM139 343h1v3h-1zM142 344h3v1h-3zM143 343h1v3h-1zM138 348h3v1h-3zM139 347h1v3h-1zM141 348h3v1h-3zM142 347h1v3h-1zM144 348h3v1h-3zM145 347h1v3h-1zM112 348h3v1h-3zM113 347h1v3h-1zM115 350h3v1h-3zM116 349h1v3h-1zM111 353h3v1h-3zM112 352h1v3h-1zM116 353h3v1h-3zM117 352h1v3h-1zM114 355h3v1h-3zM115 354h1v3h-1zM124 355h3v1h-3zM125 354h1v3h-1zM131 353h3v1h-3zM132 352h1v3h-1zM132 356h3v1h-3zM133 355h1v3h-1zM139 353h3v1h-3zM140 352h1v3h-1zM140 355h3v1h-3zM141 354h1v3h-1zM144 353h3v1h-3zM145 352h1v3h-1zM105 357h3v1h-3zM106 356h1v3h-1zM109 359h3v1h-3zM110 358h1v3h-1zM117 359h3v1h-3zM118 358h1v3h-1zM121 358h3v1h-3zM122 357h1v3h-1zM127 359h3v1h-3zM128 358h1v3h-1zM135 358h3v1h-3zM136 357h1v3h-1zM104 362h3v1h-3zM105 361h1v3h-1zM112 361h3v1h-3zM113 360h1v3h-1zM117 361h3v1h-3zM118 360h1v3h-1zM125 362h3v1h-3zM126 361h1v3h-1zM134 361h3v1h-3zM135 360h1v3h-1zM138 360h3v1h-3zM139 359h1v3h-1zM104 365h3v1h-3zM105 364h1v3h-1zM111 365h3v1h-3zM112 364h1v3h-1zM116 366h3v1h-3zM117 365h1v3h-1zM118 365h3v1h-3zM119 364h1v3h-1zM127 365h3v1h-3zM128 364h1v3h-1zM131 365h3v1h-3zM132 364h1v3h-1zM135 364h3v1h-3zM136 363h1v3h-1zM139 366h3v1h-3zM140 365h1v3h-1zM142 364h3v1h-3zM143 363h1v3h-1zM144 367h3v1h-3zM145 366h1v3h-1zM136 370h3v1h-3zM137 369h1v3h-1zM138 372h3v1h-3zM139 371h1v3h-1zM142 372h3v1h-3zM143 371h1v3h-1zM144 375h3v1h-3zM145 374h1v3h-1zM102 372h3v1h-3zM103 371h1v3h-1zM154 267h3v1h-3zM155 266h1v3h-1zM161 266h3v1h-3zM162 265h1v3h-1zM151 270h3v1h-3zM152 269h1v3h-1zM157 269h3v1h-3zM158 268h1v3h-1zM149 275h3v1h-3zM150 274h1v3h-1zM154 276h3v1h-3zM155 275h1v3h-1zM165 274h3v1h-3zM166 273h1v3h-1zM157 279h3v1h-3zM158 278h1v3h-1zM161 282h3v1h-3zM162 281h1v3h-1zM158 285h3v1h-3zM159 284h1v3h-1zM161 285h3v1h-3zM162 284h1v3h-1zM165 283h3v1h-3zM166 282h1v3h-1zM160 288h3v1h-3zM161 287h1v3h-1zM165 287h3v1h-3zM166 286h1v3h-1zM184 269h3v1h-3zM185 268h1v3h-1zM186 268h3v1h-3zM187 267h1v3h-1zM182 277h3v1h-3zM183 276h1v3h-1zM187 277h3v1h-3zM188 276h1v3h-1zM185 279h3v1h-3zM186 278h1v3h-1zM179 282h3v1h-3zM180 281h1v3h-1zM157 293h3v1h-3zM158 292h1v3h-1zM167 292h3v1h-3zM168 291h1v3h-1zM174 293h3v1h-3zM175 292h1v3h-1zM149 296h3v1h-3zM150 295h1v3h-1zM151 299h3v1h-3zM152 298h1v3h-1zM154 299h3v1h-3zM155 298h1v3h-1zM162 295h3v1h-3zM163 294h1v3h-1zM164 297h3v1h-3zM165 296h1v3h-1zM164 301h3v1h-3zM165 300h1v3h-1zM168 301h3v1h-3zM169 300h1v3h-1zM176 297h3v1h-3zM177 296h1v3h-1zM179 298h3v1h-3zM180 297h1v3h-1zM178 302h3v1h-3zM179 301h1v3h-1zM178 304h3v1h-3zM179 303h1v3h-1zM184 301h3v1h-3zM185 300h1v3h-1zM187 302h3v1h-3zM188 301h1v3h-1zM190 298h3v1h-3zM191 297h1v3h-1zM192 295h3v1h-3zM193 294h1v3h-1zM191 301h3v1h-3zM192 300h1v3h-1zM158 304h3v1h-3zM159 303h1v3h-1zM158 305h3v1h-3zM159 304h1v3h-1zM164 305h3v1h-3zM165 304h1v3h-1zM156 308h3v1h-3zM157 307h1v3h-1zM167 310h3v1h-3zM168 309h1v3h-1zM171 306h3v1h-3zM172 305h1v3h-1zM173 309h3v1h-3zM174 308h1v3h-1zM180 307h3v1h-3zM181 306h1v3h-1zM184 306h3v1h-3zM185 305h1v3h-1zM186 307h3v1h-3zM187 306h1v3h-1zM188 306h3v1h-3zM189 305h1v3h-1zM190 305h3v1h-3zM191 304h1v3h-1zM192 305h3v1h-3zM193 304h1v3h-1zM156 314h3v1h-3zM157 313h1v3h-1zM161 314h3v1h-3zM162 313h1v3h-1zM184 312h3v1h-3zM185 311h1v3h-1zM187 313h3v1h-3zM188 312h1v3h-1zM170 316h3v1h-3zM171 315h1v3h-1zM173 317h3v1h-3zM174 316h1v3h-1zM176 314h3v1h-3zM177 313h1v3h-1zM178 312h3v1h-3zM179 311h1v3h-1zM176 316h3v1h-3zM177 315h1v3h-1zM178 316h3v1h-3zM179 315h1v3h-1zM180 316h3v1h-3zM181 315h1v3h-1zM168 319h3v1h-3zM169 318h1v3h-1zM172 319h3v1h-3zM173 318h1v3h-1zM175 319h3v1h-3zM176 318h1v3h-1zM178 319h3v1h-3zM179 318h1v3h-1zM181 319h3v1h-3zM182 318h1v3h-1zM184 318h3v1h-3zM185 317h1v3h-1zM160 320h3v1h-3zM161 319h1v3h-1zM188 320h3v1h-3zM189 319h1v3h-1zM191 320h3v1h-3zM192 319h1v3h-1zM207 267h3v1h-3zM208 266h1v3h-1zM209 268h3v1h-3zM210 267h1v3h-1zM217 267h3v1h-3zM218 266h1v3h-1zM221 267h3v1h-3zM222 266h1v3h-1zM229 268h3v1h-3zM230 267h1v3h-1zM235 267h3v1h-3zM236 266h1v3h-1zM203 270h3v1h-3zM204 269h1v3h-1zM196 272h3v1h-3zM197 271h1v3h-1zM213 270h3v1h-3zM214 269h1v3h-1zM215 272h3v1h-3zM216 271h1v3h-1zM213 274h3v1h-3zM214 273h1v3h-1zM217 272h3v1h-3zM218 271h1v3h-1zM220 270h3v1h-3zM221 269h1v3h-1zM229 271h3v1h-3zM230 270h1v3h-1zM234 272h3v1h-3zM235 271h1v3h-1zM237 271h3v1h-3zM238 270h1v3h-1zM238 274h3v1h-3zM239 273h1v3h-1zM202 277h3v1h-3zM203 276h1v3h-1zM204 279h3v1h-3zM205 278h1v3h-1zM208 275h3v1h-3zM209 274h1v3h-1zM210 277h3v1h-3zM211 276h1v3h-1zM207 279h3v1h-3zM208 278h1v3h-1zM209 281h3v1h-3zM210 280h1v3h-1zM213 277h3v1h-3zM214 276h1v3h-1zM195 279h3v1h-3zM196 278h1v3h-1zM221 279h3v1h-3zM222 278h1v3h-1zM219 281h3v1h-3zM220 280h1v3h-1zM227 279h3v1h-3zM228 278h1v3h-1zM230 278h3v1h-3zM231 277h1v3h-1zM234 276h3v1h-3zM235 275h1v3h-1zM235 280h3v1h-3zM236 279h1v3h-1zM238 281h3v1h-3zM239 280h1v3h-1zM198 284h3v1h-3zM199 283h1v3h-1zM203 284h3v1h-3zM204 283h1v3h-1zM205 285h3v1h-3zM206 284h1v3h-1zM201 287h3v1h-3zM202 286h1v3h-1zM196 287h3v1h-3zM197 286h1v3h-1zM195 290h3v1h-3zM196 289h1v3h-1zM202 290h3v1h-3zM203 289h1v3h-1zM209 285h3v1h-3zM210 284h1v3h-1zM209 287h3v1h-3zM210 286h1v3h-1zM217 284h3v1h-3zM218 283h1v3h-1zM217 287h3v1h-3zM218 286h1v3h-1zM215 291h3v1h-3zM216 290h1v3h-1zM218 293h3v1h-3zM219 292h1v3h-1zM219 292h3v1h-3zM220 291h1v3h-1zM234 289h3v1h-3zM235 288h1v3h-1zM238 286h3v1h-3zM239 285h1v3h-1zM235 294h3v1h-3zM236 293h1v3h-1zM192 295h3v1h-3zM193 294h1v3h-1zM198 294h3v1h-3zM199 293h1v3h-1zM200 295h3v1h-3zM201 294h1v3h-1zM203 295h3v1h-3zM204 294h1v3h-1zM204 298h3v1h-3zM205 297h1v3h-1zM206 299h3v1h-3zM207 298h1v3h-1zM209 295h3v1h-3zM210 294h1v3h-1zM216 297h3v1h-3zM217 296h1v3h-1zM221 298h3v1h-3zM222 297h1v3h-1zM193 302h3v1h-3zM194 301h1v3h-1zM193 305h3v1h-3zM194 304h1v3h-1zM195 307h3v1h-3zM196 306h1v3h-1zM196 308h3v1h-3zM197 307h1v3h-1zM202 304h3v1h-3zM203 303h1v3h-1zM201 307h3v1h-3zM202 306h1v3h-1zM206 306h3v1h-3zM207 305h1v3h-1zM209 306h3v1h-3zM210 305h1v3h-1zM211 308h3v1h-3zM212 307h1v3h-1zM204 310h3v1h-3zM205 309h1v3h-1zM202 311h3v1h-3zM203 310h1v3h-1zM206 311h3v1h-3zM207 310h1v3h-1zM204 313h3v1h-3zM205 312h1v3h-1zM214 311h3v1h-3zM215 310h1v3h-1zM214 313h3v1h-3zM215 312h1v3h-1zM222 304h3v1h-3zM223 303h1v3h-1zM221 307h3v1h-3zM222 306h1v3h-1zM224 308h3v1h-3zM225 307h1v3h-1zM228 309h3v1h-3zM229 308h1v3h-1zM220 309h3v1h-3zM221 308h1v3h-1zM232 307h3v1h-3zM233 306h1v3h-1zM233 308h3v1h-3zM234 307h1v3h-1zM232 311h3v1h-3zM233 310h1v3h-1zM238 310h3v1h-3zM239 309h1v3h-1zM238 313h3v1h-3zM239 312h1v3h-1zM222 317h3v1h-3zM223 316h1v3h-1zM210 318h3v1h-3zM211 317h1v3h-1zM203 320h3v1h-3zM204 319h1v3h-1zM214 320h3v1h-3zM215 319h1v3h-1zM223 320h3v1h-3zM224 319h1v3h-1zM225 320h3v1h-3zM226 319h1v3h-1zM230 320h3v1h-3zM231 319h1v3h-1zM192 320h3v1h-3zM193 319h1v3h-1zM238 316h3v1h-3zM239 315h1v3h-1zM328 128h3v1h-3zM329 127h1v3h-1zM330 128h3v1h-3zM331 127h1v3h-1zM321 130h3v1h-3zM322 129h1v3h-1zM325 131h3v1h-3zM326 130h1v3h-1zM328 132h3v1h-3zM329 131h1v3h-1zM329 133h3v1h-3zM330 132h1v3h-1zM318 134h3v1h-3zM319 133h1v3h-1zM321 134h3v1h-3zM322 133h1v3h-1zM325 134h3v1h-3zM326 133h1v3h-1zM328 135h3v1h-3zM329 134h1v3h-1zM329 137h3v1h-3zM330 136h1v3h-1zM319 138h3v1h-3zM320 137h1v3h-1zM323 141h3v1h-3zM324 140h1v3h-1zM328 140h3v1h-3zM329 139h1v3h-1zM313 143h3v1h-3zM314 142h1v3h-1zM318 144h3v1h-3zM319 143h1v3h-1zM321 144h3v1h-3zM322 143h1v3h-1zM324 145h3v1h-3zM325 144h1v3h-1zM326 149h3v1h-3zM327 148h1v3h-1zM328 150h3v1h-3zM329 149h1v3h-1zM327 153h3v1h-3zM328 152h1v3h-1zM317 149h3v1h-3zM318 148h1v3h-1zM320 150h3v1h-3zM321 149h1v3h-1zM323 151h3v1h-3zM324 150h1v3h-1zM316 152h3v1h-3zM317 151h1v3h-1zM318 154h3v1h-3zM319 153h1v3h-1zM314 155h3v1h-3zM315 154h1v3h-1zM311 155h3v1h-3zM312 154h1v3h-1zM309 155h3v1h-3zM310 154h1v3h-1zM305 149h3v1h-3zM306 148h1v3h-1zM306 152h3v1h-3zM307 151h1v3h-1zM303 152h3v1h-3zM304 151h1v3h-1zM299 154h3v1h-3zM300 153h1v3h-1zM293 150h3v1h-3zM294 149h1v3h-1zM295 152h3v1h-3zM296 151h1v3h-1zM293 155h3v1h-3zM294 154h1v3h-1zM302 156h3v1h-3zM303 155h1v3h-1zM331 122h3v1h-3zM332 121h1v3h-1zM249 274h3v1h-3zM250 273h1v3h-1zM271 270h3v1h-3zM272 269h1v3h-1zM278 270h3v1h-3zM279 269h1v3h-1zM278 277h3v1h-3zM279 276h1v3h-1zM286 272h3v1h-3zM287 271h1v3h-1zM287 277h3v1h-3zM288 276h1v3h-1zM296 270h3v1h-3zM297 269h1v3h-1zM300 273h3v1h-3zM301 272h1v3h-1zM304 269h3v1h-3zM305 268h1v3h-1zM308 271h3v1h-3zM309 270h1v3h-1zM316 270h3v1h-3zM317 269h1v3h-1zM320 272h3v1h-3zM321 271h1v3h-1zM324 269h3v1h-3zM325 268h1v3h-1zM329 271h3v1h-3zM330 270h1v3h-1zM306 276h3v1h-3zM307 275h1v3h-1zM310 278h3v1h-3zM311 277h1v3h-1zM300 280h3v1h-3zM301 279h1v3h-1zM294 278h3v1h-3zM295 277h1v3h-1zM290 282h3v1h-3zM291 281h1v3h-1zM296 284h3v1h-3zM297 283h1v3h-1zM300 286h3v1h-3zM301 285h1v3h-1zM304 284h3v1h-3zM305 283h1v3h-1zM312 282h3v1h-3zM313 281h1v3h-1zM318 286h3v1h-3zM319 285h1v3h-1zM314 290h3v1h-3zM315 289h1v3h-1zM308 288h3v1h-3zM309 287h1v3h-1zM304 290h3v1h-3zM305 289h1v3h-1zM298 291h3v1h-3zM299 290h1v3h-1zM292 290h3v1h-3zM293 289h1v3h-1zM288 292h3v1h-3zM289 291h1v3h-1zM282 290h3v1h-3zM283 289h1v3h-1zM286 296h3v1h-3zM287 295h1v3h-1zM292 296h3v1h-3zM293 295h1v3h-1zM300 296h3v1h-3zM301 295h1v3h-1zM306 296h3v1h-3zM307 295h1v3h-1zM316 296h3v1h-3zM317 295h1v3h-1zM274 294h3v1h-3zM275 293h1v3h-1zM276 298h3v1h-3zM277 297h1v3h-1zM280 298h3v1h-3zM281 297h1v3h-1zM241 280h3v1h-3zM242 279h1v3h-1zM247 281h3v1h-3zM248 280h1v3h-1zM261 281h3v1h-3zM262 280h1v3h-1zM263 284h3v1h-3zM264 283h1v3h-1zM243 286h3v1h-3zM244 285h1v3h-1zM251 286h3v1h-3zM252 285h1v3h-1zM257 288h3v1h-3zM258 287h1v3h-1zM265 288h3v1h-3zM266 287h1v3h-1zM247 291h3v1h-3zM248 290h1v3h-1zM253 292h3v1h-3zM254 291h1v3h-1zM259 292h3v1h-3zM260 291h1v3h-1zM243 296h3v1h-3zM244 295h1v3h-1zM249 298h3v1h-3zM250 297h1v3h-1zM255 301h3v1h-3zM256 300h1v3h-1zM261 303h3v1h-3zM262 302h1v3h-1zM247 304h3v1h-3zM248 303h1v3h-1zM241 305h3v1h-3zM242 304h1v3h-1zM251 307h3v1h-3zM252 306h1v3h-1zM245 309h3v1h-3zM246 308h1v3h-1zM239 311h3v1h-3zM240 310h1v3h-1zM257 309h3v1h-3zM258 308h1v3h-1zM263 309h3v1h-3zM264 308h1v3h-1zM265 307h3v1h-3zM266 306h1v3h-1zM269 305h3v1h-3zM270 304h1v3h-1zM269 311h3v1h-3zM270 310h1v3h-1zM243 315h3v1h-3zM244 314h1v3h-1zM249 317h3v1h-3zM250 316h1v3h-1zM255 316h3v1h-3zM256 315h1v3h-1zM261 317h3v1h-3zM262 316h1v3h-1zM267 315h3v1h-3zM268 314h1v3h-1zM271 321h3v1h-3zM272 320h1v3h-1zM241 321h3v1h-3zM242 320h1v3h-1zM247 323h3v1h-3zM248 322h1v3h-1zM243 327h3v1h-3zM244 326h1v3h-1zM251 325h3v1h-3zM252 324h1v3h-1zM259 327h3v1h-3zM260 326h1v3h-1zM276 327h3v1h-3zM277 326h1v3h-1zM278 317h3v1h-3zM279 316h1v3h-1zM280 323h3v1h-3zM281 322h1v3h-1zM282 327h3v1h-3zM283 326h1v3h-1zM321 305h3v1h-3zM322 304h1v3h-1zM328 309h3v1h-3zM329 308h1v3h-1zM324 313h3v1h-3zM325 312h1v3h-1zM318 313h3v1h-3zM319 312h1v3h-1zM329 315h3v1h-3zM330 314h1v3h-1zM316 321h3v1h-3zM317 320h1v3h-1zM322 321h3v1h-3zM323 320h1v3h-1zM326 327h3v1h-3zM327 326h1v3h-1zM314 331h3v1h-3zM315 330h1v3h-1zM306 325h3v1h-3zM307 324h1v3h-1zM300 323h3v1h-3zM301 322h1v3h-1zM294 325h3v1h-3zM295 324h1v3h-1zM290 327h3v1h-3zM291 326h1v3h-1zM288 331h3v1h-3zM289 330h1v3h-1zM282 331h3v1h-3zM283 330h1v3h-1zM259 331h3v1h-3zM260 330h1v3h-1zM265 333h3v1h-3zM266 332h1v3h-1zM239 335h3v1h-3zM240 334h1v3h-1zM286 337h3v1h-3zM287 336h1v3h-1zM292 339h3v1h-3zM293 338h1v3h-1zM298 335h3v1h-3zM299 334h1v3h-1zM310 339h3v1h-3zM311 338h1v3h-1zM318 337h3v1h-3zM319 336h1v3h-1zM324 335h3v1h-3zM325 334h1v3h-1zM328 341h3v1h-3zM329 340h1v3h-1zM259 343h3v1h-3zM260 342h1v3h-1zM265 343h3v1h-3zM266 342h1v3h-1zM245 345h3v1h-3zM246 344h1v3h-1zM280 343h3v1h-3zM281 342h1v3h-1zM294 345h3v1h-3zM295 344h1v3h-1zM312 345h3v1h-3zM313 344h1v3h-1zM274 347h3v1h-3zM275 346h1v3h-1zM284 349h3v1h-3zM285 348h1v3h-1zM292 349h3v1h-3zM293 348h1v3h-1zM302 349h3v1h-3zM303 348h1v3h-1zM318 349h3v1h-3zM319 348h1v3h-1zM251 349h3v1h-3zM252 348h1v3h-1zM247 353h3v1h-3zM248 352h1v3h-1zM255 355h3v1h-3zM256 354h1v3h-1zM253 359h3v1h-3zM254 358h1v3h-1zM259 359h3v1h-3zM260 358h1v3h-1zM263 353h3v1h-3zM264 352h1v3h-1zM276 355h3v1h-3zM277 354h1v3h-1zM284 355h3v1h-3zM285 354h1v3h-1zM290 353h3v1h-3zM291 352h1v3h-1zM298 355h3v1h-3zM299 354h1v3h-1zM306 353h3v1h-3zM307 352h1v3h-1zM310 357h3v1h-3zM311 356h1v3h-1zM324 355h3v1h-3zM325 354h1v3h-1zM328 353h3v1h-3zM329 352h1v3h-1zM278 361h3v1h-3zM279 360h1v3h-1zM286 361h3v1h-3zM287 360h1v3h-1zM294 361h3v1h-3zM295 360h1v3h-1zM302 359h3v1h-3zM303 358h1v3h-1zM316 361h3v1h-3zM317 360h1v3h-1zM243 361h3v1h-3zM244 360h1v3h-1zM249 365h3v1h-3zM250 364h1v3h-1zM243 370h3v1h-3zM244 369h1v3h-1zM249 370h3v1h-3zM250 369h1v3h-1zM253 372h3v1h-3zM254 371h1v3h-1zM271 368h3v1h-3zM272 367h1v3h-1zM274 372h3v1h-3zM275 371h1v3h-1zM286 368h3v1h-3zM287 367h1v3h-1zM292 372h3v1h-3zM293 371h1v3h-1zM300 368h3v1h-3zM301 367h1v3h-1zM306 372h3v1h-3zM307 371h1v3h-1zM312 374h3v1h-3zM313 373h1v3h-1zM320 370h3v1h-3zM321 369h1v3h-1zM328 368h3v1h-3zM329 367h1v3h-1zM300 374h3v1h-3zM301 373h1v3h-1zM334 268h3v1h-3zM335 267h1v3h-1zM336 269h3v1h-3zM337 268h1v3h-1zM339 270h3v1h-3zM340 269h1v3h-1zM341 270h3v1h-3zM342 269h1v3h-1zM336 272h3v1h-3zM337 271h1v3h-1zM340 274h3v1h-3zM341 273h1v3h-1zM335 276h3v1h-3zM336 275h1v3h-1zM338 279h3v1h-3zM339 278h1v3h-1zM344 277h3v1h-3zM345 276h1v3h-1zM370 287h3v1h-3zM371 286h1v3h-1zM340 289h3v1h-3zM341 288h1v3h-1zM343 292h3v1h-3zM344 291h1v3h-1zM340 301h3v1h-3zM341 300h1v3h-1zM335 315h3v1h-3zM336 314h1v3h-1zM340 319h3v1h-3zM341 318h1v3h-1zM340 326h3v1h-3zM341 325h1v3h-1zM332 327h3v1h-3zM333 326h1v3h-1zM391 314h3v1h-3zM392 313h1v3h-1zM383 319h3v1h-3zM384 318h1v3h-1zM383 322h3v1h-3zM384 321h1v3h-1zM374 324h3v1h-3zM375 323h1v3h-1zM378 325h3v1h-3zM379 324h1v3h-1zM346 355h3v1h-3zM347 354h1v3h-1zM390 366h3v1h-3zM391 365h1v3h-1zM333 369h3v1h-3zM334 368h1v3h-1zM95 379h3v1h-3zM96 378h1v3h-1zM85 388h3v1h-3zM86 387h1v3h-1zM90 390h3v1h-3zM91 389h1v3h-1zM89 396h3v1h-3zM90 395h1v3h-1zM85 399h3v1h-3zM86 398h1v3h-1zM98 387h3v1h-3zM99 386h1v3h-1zM100 410h3v1h-3zM101 409h1v3h-1zM105 412h3v1h-3zM106 411h1v3h-1zM102 416h3v1h-3zM103 415h1v3h-1zM112 413h3v1h-3zM113 412h1v3h-1zM115 417h3v1h-3zM116 416h1v3h-1zM127 412h3v1h-3zM128 411h1v3h-1zM133 413h3v1h-3zM134 412h1v3h-1zM137 417h3v1h-3zM138 416h1v3h-1zM145 412h3v1h-3zM146 411h1v3h-1zM138 404h3v1h-3zM139 403h1v3h-1zM81 424h3v1h-3zM82 423h1v3h-1zM88 427h3v1h-3zM89 426h1v3h-1zM76 439h3v1h-3zM77 438h1v3h-1zM86 438h3v1h-3zM87 437h1v3h-1zM85 450h3v1h-3zM86 449h1v3h-1zM137 450h3v1h-3zM138 449h1v3h-1zM148 402h3v1h-3zM149 401h1v3h-1zM148 407h3v1h-3zM149 406h1v3h-1zM156 405h3v1h-3zM157 404h1v3h-1zM146 412h3v1h-3zM147 411h1v3h-1zM167 417h3v1h-3zM168 416h1v3h-1zM181 432h3v1h-3zM182 431h1v3h-1zM195 404h3v1h-3zM196 403h1v3h-1zM199 402h3v1h-3zM200 401h1v3h-1zM208 402h3v1h-3zM209 401h1v3h-1zM210 399h3v1h-3zM211 398h1v3h-1zM219 399h3v1h-3zM220 398h1v3h-1zM235 408h3v1h-3zM236 407h1v3h-1zM237 401h3v1h-3zM238 400h1v3h-1zM238 394h3v1h-3zM239 393h1v3h-1zM231 398h3v1h-3zM232 397h1v3h-1zM193 390h3v1h-3zM194 389h1v3h-1zM198 392h3v1h-3zM199 391h1v3h-1zM240 379h3v1h-3zM241 378h1v3h-1zM242 383h3v1h-3zM243 382h1v3h-1zM245 383h3v1h-3zM246 382h1v3h-1zM247 382h3v1h-3zM248 381h1v3h-1zM248 378h3v1h-3zM249 377h1v3h-1zM253 377h3v1h-3zM254 376h1v3h-1zM256 380h3v1h-3zM257 379h1v3h-1zM254 380h3v1h-3zM255 379h1v3h-1zM249 385h3v1h-3zM250 384h1v3h-1zM245 388h3v1h-3zM246 387h1v3h-1zM247 390h3v1h-3zM248 389h1v3h-1zM244 391h3v1h-3zM245 390h1v3h-1zM239 394h3v1h-3zM240 393h1v3h-1zM241 400h3v1h-3zM242 399h1v3h-1zM247 398h3v1h-3zM248 397h1v3h-1zM250 395h3v1h-3zM251 394h1v3h-1zM257 402h3v1h-3zM258 401h1v3h-1zM259 399h3v1h-3zM260 398h1v3h-1zM258 390h3v1h-3zM259 389h1v3h-1zM261 390h3v1h-3zM262 389h1v3h-1zM264 384h3v1h-3zM265 383h1v3h-1zM267 381h3v1h-3zM268 380h1v3h-1zM265 394h3v1h-3zM266 393h1v3h-1zM267 396h3v1h-3zM268 395h1v3h-1zM272 377h3v1h-3zM273 376h1v3h-1zM281 378h3v1h-3zM282 377h1v3h-1zM287 379h3v1h-3zM288 378h1v3h-1zM287 382h3v1h-3zM288 381h1v3h-1zM294 378h3v1h-3zM295 377h1v3h-1zM297 379h3v1h-3zM298 378h1v3h-1zM297 384h3v1h-3zM298 383h1v3h-1zM299 389h3v1h-3zM300 388h1v3h-1zM299 392h3v1h-3zM300 391h1v3h-1zM304 386h3v1h-3zM305 385h1v3h-1zM308 385h3v1h-3zM309 384h1v3h-1zM308 388h3v1h-3zM309 387h1v3h-1zM312 382h3v1h-3zM313 381h1v3h-1zM316 387h3v1h-3zM317 386h1v3h-1zM318 385h3v1h-3zM319 384h1v3h-1zM319 381h3v1h-3zM320 380h1v3h-1zM324 378h3v1h-3zM325 377h1v3h-1zM331 383h3v1h-3zM332 382h1v3h-1zM280 387h3v1h-3zM281 386h1v3h-1zM277 391h3v1h-3zM278 390h1v3h-1zM283 392h3v1h-3zM284 391h1v3h-1zM289 393h3v1h-3zM290 392h1v3h-1zM276 396h3v1h-3zM277 395h1v3h-1zM279 396h3v1h-3zM280 395h1v3h-1zM276 399h3v1h-3zM277 398h1v3h-1zM295 395h3v1h-3zM296 394h1v3h-1zM302 398h3v1h-3zM303 397h1v3h-1zM304 396h3v1h-3zM305 395h1v3h-1zM307 395h3v1h-3zM308 394h1v3h-1zM309 398h3v1h-3zM310 397h1v3h-1zM312 396h3v1h-3zM313 395h1v3h-1zM314 395h3v1h-3zM315 394h1v3h-1zM315 393h3v1h-3zM316 392h1v3h-1zM306 399h3v1h-3zM307 398h1v3h-1zM325 396h3v1h-3zM326 395h1v3h-1zM330 396h3v1h-3zM331 395h1v3h-1zM250 406h3v1h-3zM251 405h1v3h-1zM251 408h3v1h-3zM252 407h1v3h-1zM264 408h3v1h-3zM265 407h1v3h-1zM243 411h3v1h-3zM244 410h1v3h-1zM286 406h3v1h-3zM287 405h1v3h-1zM289 407h3v1h-3zM290 406h1v3h-1zM289 410h3v1h-3zM290 409h1v3h-1zM286 412h3v1h-3zM287 411h1v3h-1zM295 405h3v1h-3zM296 404h1v3h-1zM296 411h3v1h-3zM297 410h1v3h-1zM320 411h3v1h-3zM321 410h1v3h-1zM261 420h3v1h-3zM262 419h1v3h-1zM297 423h3v1h-3zM298 422h1v3h-1zM308 422h3v1h-3zM309 421h1v3h-1zM291 435h3v1h-3zM292 434h1v3h-1zM295 453h3v1h-3zM296 452h1v3h-1zM317 459h3v1h-3zM318 458h1v3h-1zM344 378h3v1h-3zM345 377h1v3h-1zM336 386h3v1h-3zM337 385h1v3h-1zM351 390h3v1h-3zM352 389h1v3h-1zM334 395h3v1h-3zM335 394h1v3h-1zM334 397h3v1h-3zM335 396h1v3h-1zM339 398h3v1h-3zM340 397h1v3h-1zM346 411h3v1h-3zM347 410h1v3h-1zM363 410h3v1h-3zM364 409h1v3h-1zM383 444h3v1h-3zM384 443h1v3h-1zM335 457h3v1h-3zM336 456h1v3h-1zM294 161h3v1h-3zM295 160h1v3h-1zM298 159h3v1h-3zM299 158h1v3h-1zM297 167h3v1h-3zM298 166h1v3h-1zM295 179h3v1h-3zM296 178h1v3h-1zM298 183h3v1h-3zM299 182h1v3h-1zM297 168h3v1h-3zM298 167h1v3h-1zM303 158h3v1h-3zM304 157h1v3h-1zM301 165h3v1h-3zM302 164h1v3h-1zM293 179h3v1h-3zM294 178h1v3h-1zM292 173h3v1h-3zM293 172h1v3h-1zM298 167h3v1h-3zM299 166h1v3h-1zM297 159h3v1h-3zM298 158h1v3h-1zM299 169h3v1h-3zM300 168h1v3h-1zM293 173h3v1h-3zM294 172h1v3h-1zM295 165h3v1h-3zM296 164h1v3h-1zM300 176h3v1h-3zM301 175h1v3h-1zM292 173h3v1h-3zM293 172h1v3h-1zM296 181h3v1h-3zM297 180h1v3h-1zM299 165h3v1h-3zM300 164h1v3h-1zM303 160h3v1h-3zM304 159h1v3h-1zM295 177h3v1h-3zM296 176h1v3h-1zM291 170h3v1h-3zM292 169h1v3h-1zM300 172h3v1h-3zM301 171h1v3h-1zM301 165h3v1h-3zM302 164h1v3h-1zM299 173h3v1h-3zM300 172h1v3h-1zM297 169h3v1h-3zM298 168h1v3h-1zM296 175h3v1h-3zM297 174h1v3h-1zM290 176h3v1h-3zM291 175h1v3h-1zM301 165h3v1h-3zM302 164h1v3h-1zM294 175h3v1h-3zM295 174h1v3h-1zM290 178h3v1h-3zM291 177h1v3h-1zM294 181h3v1h-3zM295 180h1v3h-1zM297 181h3v1h-3zM298 180h1v3h-1zM300 180h3v1h-3zM301 179h1v3h-1zM293 168h3v1h-3zM294 167h1v3h-1zM294 181h3v1h-3zM295 180h1v3h-1zM302 161h3v1h-3zM303 160h1v3h-1zM291 163h3v1h-3zM292 162h1v3h-1zM292 170h3v1h-3zM293 169h1v3h-1zM297 164h3v1h-3zM298 163h1v3h-1zM294 172h3v1h-3zM295 171h1v3h-1zM302 176h3v1h-3zM303 175h1v3h-1zM296 174h3v1h-3zM297 173h1v3h-1zM298 158h3v1h-3zM299 157h1v3h-1zM302 178h3v1h-3zM303 177h1v3h-1zM301 179h3v1h-3zM302 178h1v3h-1zM294 168h3v1h-3zM295 167h1v3h-1zM290 174h3v1h-3zM291 173h1v3h-1zM292 161h3v1h-3zM293 160h1v3h-1zM294 158h3v1h-3zM295 157h1v3h-1zM298 161h3v1h-3zM299 160h1v3h-1zM293 166h3v1h-3zM294 165h1v3h-1zM294 160h3v1h-3zM295 159h1v3h-1zM296 170h3v1h-3zM297 169h1v3h-1zM294 164h3v1h-3zM295 163h1v3h-1zM301 161h3v1h-3zM302 160h1v3h-1zM296 161h3v1h-3zM297 160h1v3h-1zM297 158h3v1h-3zM298 157h1v3h-1zM296 183h3v1h-3zM297 182h1v3h-1zM301 176h3v1h-3zM302 175h1v3h-1zM293 167h3v1h-3zM294 166h1v3h-1zM291 178h3v1h-3zM292 177h1v3h-1zM296 178h3v1h-3zM297 177h1v3h-1zM294 163h3v1h-3zM295 162h1v3h-1zM301 179h3v1h-3zM302 178h1v3h-1zM300 177h3v1h-3zM301 176h1v3h-1zM292 171h3v1h-3zM293 170h1v3h-1zM294 158h3v1h-3zM295 157h1v3h-1zM293 176h3v1h-3zM294 175h1v3h-1zM302 169h3v1h-3zM303 168h1v3h-1zM302 167h3v1h-3zM303 166h1v3h-1zM292 163h3v1h-3zM293 162h1v3h-1zM292 163h3v1h-3zM293 162h1v3h-1zM298 181h3v1h-3zM299 180h1v3h-1zM301 170h3v1h-3zM302 169h1v3h-1zM298 179h3v1h-3zM299 178h1v3h-1zM290 175h3v1h-3zM291 174h1v3h-1zM302 178h3v1h-3zM303 177h1v3h-1zM300 170h3v1h-3zM301 169h1v3h-1zM291 178h3v1h-3zM292 177h1v3h-1zM294 179h3v1h-3zM295 178h1v3h-1zM303 168h3v1h-3zM304 167h1v3h-1zM295 183h3v1h-3zM296 182h1v3h-1zM299 162h3v1h-3zM300 161h1v3h-1zM302 179h3v1h-3zM303 178h1v3h-1zM291 179h3v1h-3zM292 178h1v3h-1zM303 175h3v1h-3zM304 174h1v3h-1zM294 172h3v1h-3zM295 171h1v3h-1zM303 175h3v1h-3zM304 174h1v3h-1zM296 182h3v1h-3zM297 181h1v3h-1zM295 181h3v1h-3zM296 180h1v3h-1zM301 163h3v1h-3zM302 162h1v3h-1zM293 165h3v1h-3zM294 164h1v3h-1zM292 173h3v1h-3zM293 172h1v3h-1zM293 168h3v1h-3zM294 167h1v3h-1zM292 190h3v1h-3zM293 189h1v3h-1zM299 202h3v1h-3zM300 201h1v3h-1zM294 203h3v1h-3zM295 202h1v3h-1zM296 192h3v1h-3zM297 191h1v3h-1zM297 178h3v1h-3zM298 177h1v3h-1zM294 182h3v1h-3zM295 181h1v3h-1zM286 190h3v1h-3zM287 189h1v3h-1zM303 193h3v1h-3zM304 192h1v3h-1zM291 192h3v1h-3zM292 191h1v3h-1zM298 199h3v1h-3zM299 198h1v3h-1zM284 193h3v1h-3zM285 192h1v3h-1zM288 185h3v1h-3zM289 184h1v3h-1zM304 191h3v1h-3zM305 190h1v3h-1zM298 198h3v1h-3zM299 197h1v3h-1zM308 189h3v1h-3zM309 188h1v3h-1zM299 191h3v1h-3zM300 190h1v3h-1zM296 196h3v1h-3zM297 195h1v3h-1zM295 192h3v1h-3zM296 191h1v3h-1zM295 203h3v1h-3zM296 202h1v3h-1zM302 202h3v1h-3zM303 201h1v3h-1zM309 184h3v1h-3zM310 183h1v3h-1zM298 203h3v1h-3zM299 202h1v3h-1zM306 181h3v1h-3zM307 180h1v3h-1zM285 189h3v1h-3zM286 188h1v3h-1zM283 184h3v1h-3zM284 183h1v3h-1zM283 196h3v1h-3zM284 195h1v3h-1zM286 197h3v1h-3zM287 196h1v3h-1zM301 181h3v1h-3zM302 180h1v3h-1zM293 191h3v1h-3zM294 190h1v3h-1zM286 189h3v1h-3zM287 188h1v3h-1zM296 186h3v1h-3zM297 185h1v3h-1zM287 186h3v1h-3zM288 185h1v3h-1zM303 178h3v1h-3zM304 177h1v3h-1zM298 189h3v1h-3zM299 188h1v3h-1zM282 186h3v1h-3zM283 185h1v3h-1zM175 349h3v1h-3zM176 348h1v3h-1zM149 375h3v1h-3zM150 374h1v3h-1zM183 374h3v1h-3zM184 373h1v3h-1zM151 335h3v1h-3zM152 334h1v3h-1zM148 364h3v1h-3zM149 363h1v3h-1zM159 327h3v1h-3zM160 326h1v3h-1zM166 371h3v1h-3zM167 370h1v3h-1zM184 334h3v1h-3zM185 333h1v3h-1zM153 371h3v1h-3zM154 370h1v3h-1zM173 359h3v1h-3zM174 358h1v3h-1zM150 323h3v1h-3zM151 322h1v3h-1zM178 344h3v1h-3zM179 343h1v3h-1zM149 373h3v1h-3zM150 372h1v3h-1zM176 365h3v1h-3zM177 364h1v3h-1zM150 368h3v1h-3zM151 367h1v3h-1zM149 368h3v1h-3zM150 367h1v3h-1zM167 339h3v1h-3zM168 338h1v3h-1zM172 372h3v1h-3zM173 371h1v3h-1zM159 327h3v1h-3zM160 326h1v3h-1zM171 333h3v1h-3zM172 332h1v3h-1zM151 329h3v1h-3zM152 328h1v3h-1zM148 331h3v1h-3zM149 330h1v3h-1zM161 337h3v1h-3zM162 336h1v3h-1zM182 336h3v1h-3zM183 335h1v3h-1zM170 330h3v1h-3zM171 329h1v3h-1zM162 321h3v1h-3zM163 320h1v3h-1zM158 321h3v1h-3zM159 320h1v3h-1zM180 351h3v1h-3zM181 350h1v3h-1zM155 347h3v1h-3zM156 346h1v3h-1zM190 326h3v1h-3zM191 325h1v3h-1zM184 344h3v1h-3zM185 343h1v3h-1zM169 367h3v1h-3zM170 366h1v3h-1zM164 348h3v1h-3zM165 347h1v3h-1zM178 375h3v1h-3zM179 374h1v3h-1zM162 367h3v1h-3zM163 366h1v3h-1zM179 356h3v1h-3zM180 355h1v3h-1zM165 339h3v1h-3zM166 338h1v3h-1zM149 327h3v1h-3zM150 326h1v3h-1zM149 361h3v1h-3zM150 360h1v3h-1zM158 329h3v1h-3zM159 328h1v3h-1zM150 367h3v1h-3zM151 366h1v3h-1zM187 358h3v1h-3zM188 357h1v3h-1zM159 334h3v1h-3zM160 333h1v3h-1zM160 346h3v1h-3zM161 345h1v3h-1zM153 345h3v1h-3zM154 344h1v3h-1zM158 374h3v1h-3zM159 373h1v3h-1zM192 351h3v1h-3zM193 350h1v3h-1zM157 374h3v1h-3zM158 373h1v3h-1zM161 340h3v1h-3zM162 339h1v3h-1zM146 341h3v1h-3zM147 340h1v3h-1zM168 348h3v1h-3zM169 347h1v3h-1zM155 348h3v1h-3zM156 347h1v3h-1zM146 335h3v1h-3zM147 334h1v3h-1zM150 342h3v1h-3zM151 341h1v3h-1zM148 321h3v1h-3zM149 320h1v3h-1zM160 333h3v1h-3zM161 332h1v3h-1zM174 350h3v1h-3zM175 349h1v3h-1zM181 357h3v1h-3zM182 356h1v3h-1zM180 369h3v1h-3zM181 368h1v3h-1zM164 338h3v1h-3zM165 337h1v3h-1zM192 328h3v1h-3zM193 327h1v3h-1zM180 356h3v1h-3zM181 355h1v3h-1zM148 367h3v1h-3zM149 366h1v3h-1zM188 355h3v1h-3zM189 354h1v3h-1zM180 365h3v1h-3zM181 364h1v3h-1zM153 349h3v1h-3zM154 348h1v3h-1zM170 367h3v1h-3zM171 366h1v3h-1zM184 366h3v1h-3zM185 365h1v3h-1zM173 370h3v1h-3zM174 369h1v3h-1zM178 359h3v1h-3zM179 358h1v3h-1zM157 322h3v1h-3zM158 321h1v3h-1zM152 340h3v1h-3zM153 339h1v3h-1zM151 367h3v1h-3zM152 366h1v3h-1zM172 355h3v1h-3zM173 354h1v3h-1zM175 358h3v1h-3zM176 357h1v3h-1zM169 320h3v1h-3zM170 319h1v3h-1zM183 362h3v1h-3zM184 361h1v3h-1zM170 350h3v1h-3zM171 349h1v3h-1zM177 324h3v1h-3zM178 323h1v3h-1zM181 334h3v1h-3zM182 333h1v3h-1zM149 335h3v1h-3zM150 334h1v3h-1zM180 331h3v1h-3zM181 330h1v3h-1zM181 375h3v1h-3zM182 374h1v3h-1zM169 341h3v1h-3zM170 340h1v3h-1zM169 358h3v1h-3zM170 357h1v3h-1zM182 355h3v1h-3zM183 354h1v3h-1zM176 324h3v1h-3zM177 323h1v3h-1zM153 334h3v1h-3zM154 333h1v3h-1zM181 337h3v1h-3zM182 336h1v3h-1zM173 321h3v1h-3zM174 320h1v3h-1zM149 335h3v1h-3zM150 334h1v3h-1zM178 359h3v1h-3zM179 358h1v3h-1zM178 336h3v1h-3zM179 335h1v3h-1zM170 346h3v1h-3zM171 345h1v3h-1zM168 327h3v1h-3zM169 326h1v3h-1zM188 331h3v1h-3zM189 330h1v3h-1zM192 372h3v1h-3zM193 371h1v3h-1zM147 346h3v1h-3zM148 345h1v3h-1zM185 374h3v1h-3zM186 373h1v3h-1zM167 335h3v1h-3zM168 334h1v3h-1zM156 373h3v1h-3zM157 372h1v3h-1zM156 353h3v1h-3zM157 352h1v3h-1zM153 349h3v1h-3zM154 348h1v3h-1zM191 327h3v1h-3zM192 326h1v3h-1zM185 348h3v1h-3zM186 347h1v3h-1zM188 359h3v1h-3zM189 358h1v3h-1zM157 370h3v1h-3zM158 369h1v3h-1zM169 321h3v1h-3zM170 320h1v3h-1zM146 348h3v1h-3zM147 347h1v3h-1zM167 337h3v1h-3zM168 336h1v3h-1zM153 339h3v1h-3zM154 338h1v3h-1zM161 367h3v1h-3zM162 366h1v3h-1zM146 362h3v1h-3zM147 361h1v3h-1zM185 327h3v1h-3zM186 326h1v3h-1zM190 360h3v1h-3zM191 359h1v3h-1zM188 336h3v1h-3zM189 335h1v3h-1zM163 342h3v1h-3zM164 341h1v3h-1zM193 353h3v1h-3zM194 352h1v3h-1zM163 344h3v1h-3zM164 343h1v3h-1zM159 323h3v1h-3zM160 322h1v3h-1zM151 367h3v1h-3zM152 366h1v3h-1zM159 372h3v1h-3zM160 371h1v3h-1zM158 335h3v1h-3zM159 334h1v3h-1zM170 331h3v1h-3zM171 330h1v3h-1zM164 374h3v1h-3zM165 373h1v3h-1zM188 365h3v1h-3zM189 364h1v3h-1zM176 371h3v1h-3zM177 370h1v3h-1zM190 351h3v1h-3zM191 350h1v3h-1zM180 323h3v1h-3zM181 322h1v3h-1zM180 345h3v1h-3zM181 344h1v3h-1zM227 356h3v1h-3zM228 355h1v3h-1zM205 323h3v1h-3zM206 322h1v3h-1zM236 327h3v1h-3zM237 326h1v3h-1zM214 339h3v1h-3zM215 338h1v3h-1zM206 361h3v1h-3zM207 360h1v3h-1zM238 335h3v1h-3zM239 334h1v3h-1zM223 337h3v1h-3zM224 336h1v3h-1zM218 342h3v1h-3zM219 341h1v3h-1zM200 329h3v1h-3zM201 328h1v3h-1zM202 371h3v1h-3zM203 370h1v3h-1zM215 332h3v1h-3zM216 331h1v3h-1zM235 376h3v1h-3zM236 375h1v3h-1zM213 328h3v1h-3zM214 327h1v3h-1zM201 325h3v1h-3zM202 324h1v3h-1zM208 325h3v1h-3zM209 324h1v3h-1zM203 334h3v1h-3zM204 333h1v3h-1zM219 370h3v1h-3zM220 369h1v3h-1zM227 343h3v1h-3zM228 342h1v3h-1zM211 349h3v1h-3zM212 348h1v3h-1zM210 339h3v1h-3zM211 338h1v3h-1zM195 336h3v1h-3zM196 335h1v3h-1zM237 327h3v1h-3zM238 326h1v3h-1zM216 355h3v1h-3zM217 354h1v3h-1zM233 332h3v1h-3zM234 331h1v3h-1zM205 334h3v1h-3zM206 333h1v3h-1zM211 345h3v1h-3zM212 344h1v3h-1zM237 368h3v1h-3zM238 367h1v3h-1zM233 321h3v1h-3zM234 320h1v3h-1zM194 360h3v1h-3zM195 359h1v3h-1zM234 347h3v1h-3zM235 346h1v3h-1zM220 320h3v1h-3zM221 319h1v3h-1zM210 372h3v1h-3zM211 371h1v3h-1zM231 368h3v1h-3zM232 367h1v3h-1zM238 334h3v1h-3zM239 333h1v3h-1zM197 329h3v1h-3zM198 328h1v3h-1zM217 358h3v1h-3zM218 357h1v3h-1zM236 360h3v1h-3zM237 359h1v3h-1zM222 363h3v1h-3zM223 362h1v3h-1zM213 351h3v1h-3zM214 350h1v3h-1zM194 364h3v1h-3zM195 363h1v3h-1zM203 372h3v1h-3zM204 371h1v3h-1zM222 337h3v1h-3zM223 336h1v3h-1zM198 334h3v1h-3zM199 333h1v3h-1zM222 359h3v1h-3zM223 358h1v3h-1zM197 324h3v1h-3zM198 323h1v3h-1zM217 353h3v1h-3zM218 352h1v3h-1zM210 333h3v1h-3zM211 332h1v3h-1zM220 321h3v1h-3zM221 320h1v3h-1zM206 346h3v1h-3zM207 345h1v3h-1zM237 356h3v1h-3zM238 355h1v3h-1zM234 347h3v1h-3zM235 346h1v3h-1zM203 334h3v1h-3zM204 333h1v3h-1zM237 359h3v1h-3zM238 358h1v3h-1zM206 321h3v1h-3zM207 320h1v3h-1zM215 358h3v1h-3zM216 357h1v3h-1zM212 334h3v1h-3zM213 333h1v3h-1zM223 372h3v1h-3zM224 371h1v3h-1zM203 322h3v1h-3zM204 321h1v3h-1zM208 344h3v1h-3zM209 343h1v3h-1zM224 331h3v1h-3zM225 330h1v3h-1zM229 361h3v1h-3zM230 360h1v3h-1zM216 331h3v1h-3zM217 330h1v3h-1zM238 337h3v1h-3zM239 336h1v3h-1zM231 333h3v1h-3zM232 332h1v3h-1zM202 363h3v1h-3zM203 362h1v3h-1zM206 373h3v1h-3zM207 372h1v3h-1zM215 330h3v1h-3zM216 329h1v3h-1zM202 343h3v1h-3zM203 342h1v3h-1zM223 373h3v1h-3zM224 372h1v3h-1zM199 342h3v1h-3zM200 341h1v3h-1zM202 375h3v1h-3zM203 374h1v3h-1zM199 323h3v1h-3zM200 322h1v3h-1zM195 342h3v1h-3zM196 341h1v3h-1zM234 369h3v1h-3zM235 368h1v3h-1zM226 376h3v1h-3zM227 375h1v3h-1zM236 338h3v1h-3zM237 337h1v3h-1zM201 372h3v1h-3zM202 371h1v3h-1zM227 322h3v1h-3zM228 321h1v3h-1zM223 341h3v1h-3zM224 340h1v3h-1zM210 339h3v1h-3zM211 338h1v3h-1zM200 320h3v1h-3zM201 319h1v3h-1zM205 340h3v1h-3zM206 339h1v3h-1zM237 327h3v1h-3zM238 326h1v3h-1zM237 332h3v1h-3zM238 331h1v3h-1zM209 366h3v1h-3zM210 365h1v3h-1zM231 344h3v1h-3zM232 343h1v3h-1zM194 347h3v1h-3zM195 346h1v3h-1zM210 371h3v1h-3zM211 370h1v3h-1zM201 340h3v1h-3zM202 339h1v3h-1zM234 322h3v1h-3zM235 321h1v3h-1zM211 365h3v1h-3zM212 364h1v3h-1zM228 322h3v1h-3zM229 321h1v3h-1zM194 324h3v1h-3zM195 323h1v3h-1zM235 334h3v1h-3zM236 333h1v3h-1zM227 370h3v1h-3zM228 369h1v3h-1zM208 335h3v1h-3zM209 334h1v3h-1zM237 355h3v1h-3zM238 354h1v3h-1zM204 360h3v1h-3zM205 359h1v3h-1zM207 335h3v1h-3zM208 334h1v3h-1zM192 362h3v1h-3zM193 361h1v3h-1zM235 356h3v1h-3zM236 355h1v3h-1zM236 321h3v1h-3zM237 320h1v3h-1zM203 347h3v1h-3zM204 346h1v3h-1zM237 373h3v1h-3zM238 372h1v3h-1zM210 334h3v1h-3zM211 333h1v3h-1zM212 348h3v1h-3zM213 347h1v3h-1zM236 330h3v1h-3zM237 329h1v3h-1zM230 361h3v1h-3zM231 360h1v3h-1zM231 363h3v1h-3zM232 362h1v3h-1zM221 338h3v1h-3zM222 337h1v3h-1zM112 395h3v1h-3zM113 394h1v3h-1zM130 386h3v1h-3zM131 385h1v3h-1zM107 407h3v1h-3zM108 406h1v3h-1zM109 386h3v1h-3zM110 385h1v3h-1zM100 401h3v1h-3zM101 400h1v3h-1zM110 387h3v1h-3zM111 386h1v3h-1zM103 399h3v1h-3zM104 398h1v3h-1zM127 397h3v1h-3zM128 396h1v3h-1zM108 397h3v1h-3zM109 396h1v3h-1zM124 404h3v1h-3zM125 403h1v3h-1zM129 409h3v1h-3zM130 408h1v3h-1zM126 388h3v1h-3zM127 387h1v3h-1zM133 393h3v1h-3zM134 392h1v3h-1zM122 395h3v1h-3zM123 394h1v3h-1zM129 390h3v1h-3zM130 389h1v3h-1zM109 391h3v1h-3zM110 390h1v3h-1zM105 411h3v1h-3zM106 410h1v3h-1zM122 394h3v1h-3zM123 393h1v3h-1zM119 391h3v1h-3zM120 390h1v3h-1zM131 404h3v1h-3zM132 403h1v3h-1zM139 387h3v1h-3zM140 386h1v3h-1zM118 409h3v1h-3zM119 408h1v3h-1zM101 393h3v1h-3zM102 392h1v3h-1zM104 390h3v1h-3zM105 389h1v3h-1zM138 401h3v1h-3zM139 400h1v3h-1zM136 395h3v1h-3zM137 394h1v3h-1zM134 397h3v1h-3zM135 396h1v3h-1zM109 407h3v1h-3zM110 406h1v3h-1zM137 387h3v1h-3zM138 386h1v3h-1zM123 403h3v1h-3zM124 402h1v3h-1zM108 395h3v1h-3zM109 394h1v3h-1zM105 390h3v1h-3zM106 389h1v3h-1zM109 402h3v1h-3zM110 401h1v3h-1zM125 390h3v1h-3zM126 389h1v3h-1zM99 394h3v1h-3zM100 393h1v3h-1zM126 390h3v1h-3zM127 389h1v3h-1zM111 390h3v1h-3zM112 389h1v3h-1zM131 400h3v1h-3zM132 399h1v3h-1zM102 387h3v1h-3zM103 386h1v3h-1zM115 401h3v1h-3zM116 400h1v3h-1zM125 387h3v1h-3zM126 386h1v3h-1zM106 405h3v1h-3zM107 404h1v3h-1zM115 392h3v1h-3zM116 391h1v3h-1zM111 413h3v1h-3zM112 412h1v3h-1zM111 401h3v1h-3zM112 400h1v3h-1zM113 396h3v1h-3zM114 395h1v3h-1zM114 390h3v1h-3zM115 389h1v3h-1zM128 390h3v1h-3zM129 389h1v3h-1zM116 409h3v1h-3zM117 408h1v3h-1zM115 410h3v1h-3zM116 409h1v3h-1zM117 389h3v1h-3zM118 388h1v3h-1zM100 401h3v1h-3zM101 400h1v3h-1zM125 411h3v1h-3zM126 410h1v3h-1zM103 403h3v1h-3zM104 402h1v3h-1zM114 399h3v1h-3zM115 398h1v3h-1zM105 392h3v1h-3zM106 391h1v3h-1zM120 412h3v1h-3zM121 411h1v3h-1zM103 399h3v1h-3zM104 398h1v3h-1zM107 388h3v1h-3zM108 387h1v3h-1zM118 386h3v1h-3zM119 385h1v3h-1zM136 396h3v1h-3zM137 395h1v3h-1zM135 403h3v1h-3zM136 402h1v3h-1zM132 389h3v1h-3zM133 388h1v3h-1zM130 391h3v1h-3zM131 390h1v3h-1zM115 409h3v1h-3zM116 408h1v3h-1zM132 389h3v1h-3zM133 388h1v3h-1zM108 396h3v1h-3zM109 395h1v3h-1zM120 396h3v1h-3zM121 395h1v3h-1zM104 391h3v1h-3zM105 390h1v3h-1zM128 411h3v1h-3zM129 410h1v3h-1zM101 401h3v1h-3zM102 400h1v3h-1zM129 385h3v1h-3zM130 384h1v3h-1zM133 388h3v1h-3zM134 387h1v3h-1zM123 401h3v1h-3zM124 400h1v3h-1zM124 393h3v1h-3zM125 392h1v3h-1zM116 401h3v1h-3zM117 400h1v3h-1zM116 404h3v1h-3zM117 403h1v3h-1zM117 397h3v1h-3zM118 396h1v3h-1zM100 403h3v1h-3zM101 402h1v3h-1zM119 391h3v1h-3zM120 390h1v3h-1zM130 407h3v1h-3zM131 406h1v3h-1zM117 389h3v1h-3zM118 388h1v3h-1zM118 387h3v1h-3zM119 386h1v3h-1zM104 397h3v1h-3zM105 396h1v3h-1zM103 397h3v1h-3zM104 396h1v3h-1zM119 385h3v1h-3zM120 384h1v3h-1zM124 386h3v1h-3zM125 385h1v3h-1zM128 407h3v1h-3zM129 406h1v3h-1zM119 386h3v1h-3zM120 385h1v3h-1zM119 395h3v1h-3zM120 394h1v3h-1zM137 388h3v1h-3zM138 387h1v3h-1zM128 408h3v1h-3zM129 407h1v3h-1zM119 413h3v1h-3zM120 412h1v3h-1zM136 389h3v1h-3zM137 388h1v3h-1zM102 395h3v1h-3zM103 394h1v3h-1zM129 389h3v1h-3zM130 388h1v3h-1zM135 392h3v1h-3zM136 391h1v3h-1zM132 388h3v1h-3zM133 387h1v3h-1zM119 412h3v1h-3zM120 411h1v3h-1zM107 392h3v1h-3zM108 391h1v3h-1zM119 394h3v1h-3zM120 393h1v3h-1zM100 389h3v1h-3zM101 388h1v3h-1zM105 412h3v1h-3zM106 411h1v3h-1zM126 411h3v1h-3zM127 410h1v3h-1zM106 408h3v1h-3zM107 407h1v3h-1zM104 400h3v1h-3zM105 399h1v3h-1zM124 395h3v1h-3zM125 394h1v3h-1zM134 401h3v1h-3zM135 400h1v3h-1zM122 410h3v1h-3zM123 409h1v3h-1zM124 396h3v1h-3zM125 395h1v3h-1zM131 392h3v1h-3zM132 391h1v3h-1zM139 401h3v1h-3zM140 400h1v3h-1zM113 407h3v1h-3zM114 406h1v3h-1zM117 389h3v1h-3zM118 388h1v3h-1zM129 385h3v1h-3zM130 384h1v3h-1zM132 392h3v1h-3zM133 391h1v3h-1zM125 414h3v1h-3zM126 413h1v3h-1zM122 404h3v1h-3zM123 403h1v3h-1zM100 388h3v1h-3zM101 387h1v3h-1zM124 397h3v1h-3zM125 396h1v3h-1zM120 411h3v1h-3zM121 410h1v3h-1zM104 391h3v1h-3zM105 390h1v3h-1zM99 395h3v1h-3zM100 394h1v3h-1zM103 395h3v1h-3zM104 394h1v3h-1zM108 402h3v1h-3zM109 401h1v3h-1zM123 390h3v1h-3zM124 389h1v3h-1zM124 398h3v1h-3zM125 397h1v3h-1zM104 412h3v1h-3zM105 411h1v3h-1zM109 388h3v1h-3zM110 387h1v3h-1zM103 403h3v1h-3zM104 402h1v3h-1zM134 407h3v1h-3zM135 406h1v3h-1zM115 392h3v1h-3zM116 391h1v3h-1zM121 395h3v1h-3zM122 394h1v3h-1zM125 397h3v1h-3zM126 396h1v3h-1zM136 406h3v1h-3zM137 405h1v3h-1zM109 411h3v1h-3zM110 410h1v3h-1zM101 400h3v1h-3zM102 399h1v3h-1zM115 391h3v1h-3zM116 390h1v3h-1zM99 401h3v1h-3zM100 400h1v3h-1zM137 388h3v1h-3zM138 387h1v3h-1zM107 402h3v1h-3zM108 401h1v3h-1zM119 403h3v1h-3zM120 402h1v3h-1zM132 389h3v1h-3zM133 388h1v3h-1zM111 393h3v1h-3zM112 392h1v3h-1zM130 405h3v1h-3zM131 404h1v3h-1zM129 398h3v1h-3zM130 397h1v3h-1zM129 398h3v1h-3zM130 397h1v3h-1zM108 387h3v1h-3zM109 386h1v3h-1zM112 406h3v1h-3zM113 405h1v3h-1zM127 409h3v1h-3zM128 408h1v3h-1zM143 379h3v1h-3zM144 378h1v3h-1zM141 381h3v1h-3zM142 380h1v3h-1zM143 382h3v1h-3zM144 381h1v3h-1zM137 384h3v1h-3zM138 383h1v3h-1zM146 379h3v1h-3zM147 378h1v3h-1zM145 376h3v1h-3zM146 375h1v3h-1zM137 379h3v1h-3zM138 378h1v3h-1zM143 387h3v1h-3zM144 386h1v3h-1zM143 380h3v1h-3zM144 379h1v3h-1zM145 380h3v1h-3zM146 379h1v3h-1zM137 387h3v1h-3zM138 386h1v3h-1zM142 384h3v1h-3zM143 383h1v3h-1zM142 388h3v1h-3zM143 387h1v3h-1zM140 386h3v1h-3zM141 385h1v3h-1zM142 386h3v1h-3zM143 385h1v3h-1zM165 396h3v1h-3zM166 395h1v3h-1zM173 385h3v1h-3zM174 384h1v3h-1zM152 393h3v1h-3zM153 392h1v3h-1zM148 377h3v1h-3zM149 376h1v3h-1zM160 380h3v1h-3zM161 379h1v3h-1zM141 377h3v1h-3zM142 376h1v3h-1zM181 394h3v1h-3zM182 393h1v3h-1zM181 397h3v1h-3zM182 396h1v3h-1zM143 393h3v1h-3zM144 392h1v3h-1zM161 399h3v1h-3zM162 398h1v3h-1zM143 400h3v1h-3zM144 399h1v3h-1zM145 382h3v1h-3zM146 381h1v3h-1zM146 377h3v1h-3zM147 376h1v3h-1zM177 399h3v1h-3zM178 398h1v3h-1zM177 384h3v1h-3zM178 383h1v3h-1zM145 379h3v1h-3zM146 378h1v3h-1zM184 382h3v1h-3zM185 381h1v3h-1zM158 388h3v1h-3zM159 387h1v3h-1zM140 383h3v1h-3zM141 382h1v3h-1zM156 396h3v1h-3zM157 395h1v3h-1zM161 385h3v1h-3zM162 384h1v3h-1zM190 393h3v1h-3zM191 392h1v3h-1zM141 388h3v1h-3zM142 387h1v3h-1zM165 398h3v1h-3zM166 397h1v3h-1zM160 396h3v1h-3zM161 395h1v3h-1zM171 382h3v1h-3zM172 381h1v3h-1zM191 379h3v1h-3zM192 378h1v3h-1zM188 381h3v1h-3zM189 380h1v3h-1zM139 382h3v1h-3zM140 381h1v3h-1zM139 390h3v1h-3zM140 389h1v3h-1zM168 398h3v1h-3zM169 397h1v3h-1zM150 390h3v1h-3zM151 389h1v3h-1zM160 399h3v1h-3zM161 398h1v3h-1zM156 382h3v1h-3zM157 381h1v3h-1zM181 390h3v1h-3zM182 389h1v3h-1zM146 394h3v1h-3zM147 393h1v3h-1zM144 398h3v1h-3zM145 397h1v3h-1zM181 398h3v1h-3zM182 397h1v3h-1zM177 386h3v1h-3zM178 385h1v3h-1zM163 387h3v1h-3zM164 386h1v3h-1zM192 378h3v1h-3zM193 377h1v3h-1zM192 377h3v1h-3zM193 376h1v3h-1zM151 383h3v1h-3zM152 382h1v3h-1zM193 390h3v1h-3zM194 389h1v3h-1zM162 401h3v1h-3zM163 400h1v3h-1zM153 389h3v1h-3zM154 388h1v3h-1zM171 397h3v1h-3zM172 396h1v3h-1zM184 394h3v1h-3zM185 393h1v3h-1zM160 385h3v1h-3zM161 384h1v3h-1zM148 400h3v1h-3zM149 399h1v3h-1zM179 397h3v1h-3zM180 396h1v3h-1zM149 388h3v1h-3zM150 387h1v3h-1zM185 392h3v1h-3zM186 391h1v3h-1zM147 389h3v1h-3zM148 388h1v3h-1zM192 383h3v1h-3zM193 382h1v3h-1zM150 384h3v1h-3zM151 383h1v3h-1zM181 400h3v1h-3zM182 399h1v3h-1zM148 380h3v1h-3zM149 379h1v3h-1zM154 385h3v1h-3zM155 384h1v3h-1zM170 381h3v1h-3zM171 380h1v3h-1zM159 381h3v1h-3zM160 380h1v3h-1zM145 387h3v1h-3zM146 386h1v3h-1zM183 388h3v1h-3zM184 387h1v3h-1zM151 394h3v1h-3zM152 393h1v3h-1zM145 382h3v1h-3zM146 381h1v3h-1zM162 377h3v1h-3zM163 376h1v3h-1zM163 398h3v1h-3zM164 397h1v3h-1zM181 390h3v1h-3zM182 389h1v3h-1zM177 389h3v1h-3zM178 388h1v3h-1zM148 393h3v1h-3zM149 392h1v3h-1zM163 397h3v1h-3zM164 396h1v3h-1zM193 388h3v1h-3zM194 387h1v3h-1zM173 397h3v1h-3zM174 396h1v3h-1zM164 382h3v1h-3zM165 381h1v3h-1zM185 396h3v1h-3zM186 395h1v3h-1zM318 289h3v1h-3zM319 288h1v3h-1zM299 281h3v1h-3zM300 280h1v3h-1zM268 287h3v1h-3zM269 286h1v3h-1zM248 280h3v1h-3zM249 279h1v3h-1zM312 290h3v1h-3zM313 289h1v3h-1zM298 275h3v1h-3zM299 274h1v3h-1zM278 281h3v1h-3zM279 280h1v3h-1zM297 280h3v1h-3zM298 279h1v3h-1zM302 298h3v1h-3zM303 297h1v3h-1zM256 288h3v1h-3zM257 287h1v3h-1zM311 279h3v1h-3zM312 278h1v3h-1zM285 299h3v1h-3zM286 298h1v3h-1zM243 284h3v1h-3zM244 283h1v3h-1zM254 293h3v1h-3zM255 292h1v3h-1zM326 284h3v1h-3zM327 283h1v3h-1zM248 286h3v1h-3zM249 285h1v3h-1zM289 290h3v1h-3zM290 289h1v3h-1zM287 288h3v1h-3zM288 287h1v3h-1zM316 284h3v1h-3zM317 283h1v3h-1zM277 298h3v1h-3zM278 297h1v3h-1zM259 289h3v1h-3zM260 288h1v3h-1zM276 292h3v1h-3zM277 291h1v3h-1zM250 299h3v1h-3zM251 298h1v3h-1zM272 268h3v1h-3zM273 267h1v3h-1zM265 280h3v1h-3zM266 279h1v3h-1zM240 280h3v1h-3zM241 279h1v3h-1zM278 290h3v1h-3zM279 289h1v3h-1zM272 275h3v1h-3zM273 274h1v3h-1zM260 291h3v1h-3zM261 290h1v3h-1zM326 284h3v1h-3zM327 283h1v3h-1zM259 293h3v1h-3zM260 292h1v3h-1zM275 273h3v1h-3zM276 272h1v3h-1zM251 292h3v1h-3zM252 291h1v3h-1zM314 288h3v1h-3zM315 287h1v3h-1zM283 285h3v1h-3zM284 284h1v3h-1zM260 299h3v1h-3zM261 298h1v3h-1zM272 288h3v1h-3zM273 287h1v3h-1zM315 294h3v1h-3zM316 293h1v3h-1zM283 276h3v1h-3zM284 275h1v3h-1zM290 270h3v1h-3zM291 269h1v3h-1zM317 278h3v1h-3zM318 277h1v3h-1zM318 275h3v1h-3zM319 274h1v3h-1zM274 275h3v1h-3zM275 274h1v3h-1zM279 272h3v1h-3zM280 271h1v3h-1zM239 291h3v1h-3zM240 290h1v3h-1zM265 274h3v1h-3zM266 273h1v3h-1zM267 282h3v1h-3zM268 281h1v3h-1zM279 288h3v1h-3zM280 287h1v3h-1zM300 278h3v1h-3zM301 277h1v3h-1zM325 295h3v1h-3zM326 294h1v3h-1zM244 363h3v1h-3zM245 362h1v3h-1zM323 360h3v1h-3zM324 359h1v3h-1zM252 363h3v1h-3zM253 362h1v3h-1zM298 301h3v1h-3zM299 300h1v3h-1zM240 372h3v1h-3zM241 371h1v3h-1zM300 319h3v1h-3zM301 318h1v3h-1zM248 311h3v1h-3zM249 310h1v3h-1zM261 359h3v1h-3zM262 358h1v3h-1zM271 312h3v1h-3zM272 311h1v3h-1zM323 360h3v1h-3zM324 359h1v3h-1zM255 368h3v1h-3zM256 367h1v3h-1zM296 359h3v1h-3zM297 358h1v3h-1zM301 368h3v1h-3zM302 367h1v3h-1zM312 364h3v1h-3zM313 363h1v3h-1zM257 353h3v1h-3zM258 352h1v3h-1zM288 356h3v1h-3zM289 355h1v3h-1zM280 367h3v1h-3zM281 366h1v3h-1zM291 320h3v1h-3zM292 319h1v3h-1zM261 311h3v1h-3zM262 310h1v3h-1zM285 304h3v1h-3zM286 303h1v3h-1zM282 311h3v1h-3zM283 310h1v3h-1zM285 338h3v1h-3zM286 337h1v3h-1zM289 366h3v1h-3zM290 365h1v3h-1zM240 364h3v1h-3zM241 363h1v3h-1zM283 343h3v1h-3zM284 342h1v3h-1zM301 364h3v1h-3zM302 363h1v3h-1zM274 332h3v1h-3zM275 331h1v3h-1zM328 306h3v1h-3zM329 305h1v3h-1zM298 348h3v1h-3zM299 347h1v3h-1zM242 346h3v1h-3zM243 345h1v3h-1zM302 371h3v1h-3zM303 370h1v3h-1zM270 375h3v1h-3zM271 374h1v3h-1zM286 337h3v1h-3zM287 336h1v3h-1zM322 303h3v1h-3zM323 302h1v3h-1zM306 348h3v1h-3zM307 347h1v3h-1zM270 365h3v1h-3zM271 364h1v3h-1zM273 336h3v1h-3zM274 335h1v3h-1zM288 359h3v1h-3zM289 358h1v3h-1zM259 333h3v1h-3zM260 332h1v3h-1zM278 342h3v1h-3zM279 341h1v3h-1zM316 322h3v1h-3zM317 321h1v3h-1zM316 331h3v1h-3zM317 330h1v3h-1zM286 321h3v1h-3zM287 320h1v3h-1zM286 374h3v1h-3zM287 373h1v3h-1zM300 360h3v1h-3zM301 359h1v3h-1zM270 324h3v1h-3zM271 323h1v3h-1zM267 345h3v1h-3zM268 344h1v3h-1zM298 360h3v1h-3zM299 359h1v3h-1zM243 355h3v1h-3zM244 354h1v3h-1zM321 341h3v1h-3zM322 340h1v3h-1zM244 323h3v1h-3zM245 322h1v3h-1zM240 314h3v1h-3zM241 313h1v3h-1zM325 346h3v1h-3zM326 345h1v3h-1zM300 360h3v1h-3zM301 359h1v3h-1zM324 346h3v1h-3zM325 345h1v3h-1z"/>
<g clip-path="url(#rclip)">
<polyline points="697,286 697,296 699,305 702,323 708,333 715,343 722,352 730,360 734,363 750,371 761,376 771,378.5 781.6,381.6 789,384 796.5,386.5 802.6,387.7 818,391.5 830,392.5 843.6,395.4 852.5,396.5 865,397.5 880,400 900.5,401.5 906,402.5 916.5,403.3 932.5,404.3 942,404.5 958,405.2 970,405.4 981,406 1006,406.2 1022,406.2 1040,406.2" fill="none" stroke="#f00" stroke-width="3" shape-rendering="auto"/>
<path fill="#f00" d="M710 226h3v1h-3zM711 225h1v3h-1zM710 226h3v1h-3zM711 225h1v3h-1zM711 227h3v1h-3zM712 226h1v3h-1zM711 227h3v1h-3zM712 226h1v3h-1zM711 227h3v1h-3zM712 226h1v3h-1zM710 227h3v1h-3zM711 226h1v3h-1zM712 229h3v1h-3zM713 228h1v3h-1zM707 229h3v1h-3zM708 228h1v3h-1zM712 230h3v1h-3zM713 229h1v3h-1zM708 230h3v1h-3zM709 229h1v3h-1zM710 231h3v1h-3zM711 230h1v3h-1zM712 231h3v1h-3zM713 230h1v3h-1zM707 231h3v1h-3zM708 230h1v3h-1zM707 232h3v1h-3zM708 231h1v3h-1zM710 234h3v1h-3zM711 233h1v3h-1zM710 233h3v1h-3zM711 232h1v3h-1zM711 233h3v1h-3zM712 232h1v3h-1zM708 234h3v1h-3zM709 233h1v3h-1zM705 236h3v1h-3zM706 235h1v3h-1zM706 235h3v1h-3zM707 234h1v3h-1zM708 236h3v1h-3zM709 235h1v3h-1zM709 235h3v1h-3zM710 234h1v3h-1zM708 236h3v1h-3zM709 235h1v3h-1zM708 237h3v1h-3zM709 236h1v3h-1zM711 237h3v1h-3zM712 236h1v3h-1zM711 239h3v1h-3zM712 238h1v3h-1zM708 239h3v1h-3zM709 238h1v3h-1zM708 238h3v1h-3zM709 237h1v3h-1zM707 239h3v1h-3zM708 238h1v3h-1zM706 241h3v1h-3zM707 240h1v3h-1zM706 241h3v1h-3zM707 240h1v3h-1zM703 240h3v1h-3zM704 239h1v3h-1zM704 242h3v1h-3zM705 241h1v3h-1zM704 243h3v1h-3zM705 242h1v3h-1zM706 243h3v1h-3zM707 242h1v3h-1zM710 242h3v1h-3zM711 241h1v3h-1zM708 245h3v1h-3zM709 244h1v3h-1zM706 243h3v1h-3zM707 242h1v3h-1zM704 244h3v1h-3zM705 243h1v3h-1zM708 246h3v1h-3zM709 245h1v3h-1zM704 246h3v1h-3zM705 245h1v3h-1zM705 246h3v1h-3zM706 245h1v3h-1zM702 246h3v1h-3zM703 245h1v3h-1zM705 248h3v1h-3zM706 247h1v3h-1zM702 248h3v1h-3zM703 247h1v3h-1zM706 248h3v1h-3zM707 247h1v3h-1zM701 250h3v1h-3zM702 249h1v3h-1zM706 250h3v1h-3zM707 249h1v3h-1zM702 249h3v1h-3zM703 248h1v3h-1zM703 251h3v1h-3zM704 250h1v3h-1zM702 251h3v1h-3zM703 250h1v3h-1zM700 251h3v1h-3zM701 250h1v3h-1zM706 252h3v1h-3zM707 251h1v3h-1zM702 252h3v1h-3zM703 251h1v3h-1zM699 253h3v1h-3zM700 252h1v3h-1zM704 253h3v1h-3zM705 252h1v3h-1zM699 255h3v1h-3zM700 254h1v3h-1zM700 254h3v1h-3zM701 253h1v3h-1zM703 255h3v1h-3zM704 254h1v3h-1zM702 255h3v1h-3zM703 254h1v3h-1zM703 255h3v1h-3zM704 254h1v3h-1zM698 257h3v1h-3zM699 256h1v3h-1zM703 257h3v1h-3zM704 256h1v3h-1zM698 257h3v1h-3zM699 256h1v3h-1zM703 258h3v1h-3zM704 257h1v3h-1zM698 259h3v1h-3zM699 258h1v3h-1zM700 259h3v1h-3zM701 258h1v3h-1zM701 260h3v1h-3zM702 259h1v3h-1zM701 261h3v1h-3zM702 260h1v3h-1zM703 259h3v1h-3zM704 258h1v3h-1zM698 261h3v1h-3zM699 260h1v3h-1zM699 260h3v1h-3zM700 259h1v3h-1zM700 263h3v1h-3zM701 262h1v3h-1zM703 262h3v1h-3zM704 261h1v3h-1zM703 264h3v1h-3zM704 263h1v3h-1zM702 262h3v1h-3zM703 261h1v3h-1zM696 265h3v1h-3zM697 264h1v3h-1zM698 264h3v1h-3zM699 263h1v3h-1zM697 264h3v1h-3zM698 263h1v3h-1zM700 264h3v1h-3zM701 263h1v3h-1zM700 266h3v1h-3zM701 265h1v3h-1zM702 266h3v1h-3zM703 265h1v3h-1zM697 266h3v1h-3zM698 265h1v3h-1zM700 266h3v1h-3zM701 265h1v3h-1zM701 267h3v1h-3zM702 266h1v3h-1zM699 268h3v1h-3zM700 267h1v3h-1zM699 269h3v1h-3zM700 268h1v3h-1zM698 269h3v1h-3zM699 268h1v3h-1zM698 269h3v1h-3zM699 268h1v3h-1zM698 271h3v1h-3zM699 270h1v3h-1zM700 271h3v1h-3zM701 270h1v3h-1zM697 271h3v1h-3zM698 270h1v3h-1zM699 273h3v1h-3zM700 272h1v3h-1zM696 273h3v1h-3zM697 272h1v3h-1zM700 273h3v1h-3zM701 272h1v3h-1zM694 272h3v1h-3zM695 271h1v3h-1zM698 273h3v1h-3zM699 272h1v3h-1zM699 273h3v1h-3zM700 272h1v3h-1zM694 275h3v1h-3zM695 274h1v3h-1zM696 276h3v1h-3zM697 275h1v3h-1zM698 276h3v1h-3zM699 275h1v3h-1zM697 276h3v1h-3zM698 275h1v3h-1zM701 277h3v1h-3zM702 276h1v3h-1zM701 277h3v1h-3zM702 276h1v3h-1zM695 278h3v1h-3zM696 277h1v3h-1zM694 278h3v1h-3zM695 277h1v3h-1zM696 280h3v1h-3zM697 279h1v3h-1zM698 280h3v1h-3zM699 279h1v3h-1zM697 280h3v1h-3zM698 279h1v3h-1zM698 280h3v1h-3zM699 279h1v3h-1zM700 282h3v1h-3zM701 281h1v3h-1zM695 280h3v1h-3zM696 279h1v3h-1zM698 282h3v1h-3zM699 281h1v3h-1zM694 283h3v1h-3zM695 282h1v3h-1zM698 284h3v1h-3zM699 283h1v3h-1zM697 284h3v1h-3zM698 283h1v3h-1zM696 284h3v1h-3zM697 283h1v3h-1zM696 285h3v1h-3zM697 284h1v3h-1zM698 285h3v1h-3zM699 284h1v3h-1zM698 284h3v1h-3zM699 283h1v3h-1zM696 285h3v1h-3zM697 284h1v3h-1zM697 285h3v1h-3zM698 284h1v3h-1zM698 286h3v1h-3zM699 285h1v3h-1zM698 286h3v1h-3zM699 285h1v3h-1zM699 287h3v1h-3zM700 286h1v3h-1zM704 287h3v1h-3zM705 286h1v3h-1zM703 288h3v1h-3zM704 287h1v3h-1zM701 288h3v1h-3zM702 287h1v3h-1zM699 289h3v1h-3zM700 288h1v3h-1zM701 289h3v1h-3zM702 288h1v3h-1zM699 290h3v1h-3zM700 289h1v3h-1zM704 291h3v1h-3zM705 290h1v3h-1zM700 292h3v1h-3zM701 291h1v3h-1zM701 293h3v1h-3zM702 292h1v3h-1zM702 294h3v1h-3zM703 293h1v3h-1zM707 295h3v1h-3zM708 294h1v3h-1zM699 295h3v1h-3zM700 294h1v3h-1zM701 296h3v1h-3zM702 295h1v3h-1zM707 296h3v1h-3zM708 295h1v3h-1zM709 296h3v1h-3zM710 295h1v3h-1zM700 299h3v1h-3zM701 298h1v3h-1zM700 300h3v1h-3zM701 299h1v3h-1zM701 301h3v1h-3zM702 300h1v3h-1zM703 302h3v1h-3zM704 301h1v3h-1zM702 303h3v1h-3zM703 302h1v3h-1zM704 304h3v1h-3zM705 303h1v3h-1zM703 305h3v1h-3zM704 304h1v3h-1zM707 306h3v1h-3zM708 305h1v3h-1zM705 307h3v1h-3zM706 306h1v3h-1zM704 308h3v1h-3zM705 307h1v3h-1zM703 309h3v1h-3zM704 308h1v3h-1zM706 310h3v1h-3zM707 309h1v3h-1zM701 312h3v1h-3zM702 311h1v3h-1zM703 312h3v1h-3zM704 311h1v3h-1zM702 314h3v1h-3zM703 313h1v3h-1zM702 315h3v1h-3zM703 314h1v3h-1zM705 315h3v1h-3zM706 314h1v3h-1zM710 315h3v1h-3zM711 314h1v3h-1zM708 317h3v1h-3zM709 316h1v3h-1zM702 319h3v1h-3zM703 318h1v3h-1zM706 319h3v1h-3zM707 318h1v3h-1zM711 319h3v1h-3zM712 318h1v3h-1zM711 320h3v1h-3zM712 319h1v3h-1zM706 320h3v1h-3zM707 319h1v3h-1zM704 322h3v1h-3zM705 321h1v3h-1zM704 324h3v1h-3zM705 323h1v3h-1zM704 325h3v1h-3zM705 324h1v3h-1zM712 321h3v1h-3zM713 320h1v3h-1zM711 323h3v1h-3zM712 322h1v3h-1zM707 327h3v1h-3zM708 326h1v3h-1zM711 326h3v1h-3zM712 325h1v3h-1zM712 327h3v1h-3zM713 326h1v3h-1zM708 330h3v1h-3zM709 329h1v3h-1zM710 330h3v1h-3zM711 329h1v3h-1zM712 330h3v1h-3zM713 329h1v3h-1zM713 330h3v1h-3zM714 329h1v3h-1zM713 331h3v1h-3zM714 330h1v3h-1zM713 333h3v1h-3zM714 332h1v3h-1zM712 335h3v1h-3zM713 334h1v3h-1zM715 334h3v1h-3zM716 333h1v3h-1zM715 335h3v1h-3zM716 334h1v3h-1zM720 332h3v1h-3zM721 331h1v3h-1zM722 333h3v1h-3zM723 332h1v3h-1zM716 338h3v1h-3zM717 337h1v3h-1zM716 339h3v1h-3zM717 338h1v3h-1zM715 341h3v1h-3zM716 340h1v3h-1zM722 337h3v1h-3zM723 336h1v3h-1zM717 342h3v1h-3zM718 341h1v3h-1zM718 343h3v1h-3zM719 342h1v3h-1zM718 344h3v1h-3zM719 343h1v3h-1zM726 339h3v1h-3zM727 338h1v3h-1zM721 344h3v1h-3zM722 343h1v3h-1zM722 345h3v1h-3zM723 344h1v3h-1zM721 347h3v1h-3zM722 346h1v3h-1zM725 345h3v1h-3zM726 344h1v3h-1zM722 348h3v1h-3zM723 347h1v3h-1zM723 349h3v1h-3zM724 348h1v3h-1zM724 349h3v1h-3zM725 348h1v3h-1zM727 348h3v1h-3zM728 347h1v3h-1zM726 350h3v1h-3zM727 349h1v3h-1zM726 351h3v1h-3zM727 350h1v3h-1zM730 349h3v1h-3zM731 348h1v3h-1zM727 353h3v1h-3zM728 352h1v3h-1zM729 353h3v1h-3zM730 352h1v3h-1zM730 353h3v1h-3zM731 352h1v3h-1zM728 356h3v1h-3zM729 355h1v3h-1zM731 355h3v1h-3zM732 354h1v3h-1zM731 357h3v1h-3zM732 356h1v3h-1zM731 357h3v1h-3zM732 356h1v3h-1zM731 359h3v1h-3zM732 358h1v3h-1zM733 358h3v1h-3zM734 357h1v3h-1zM739 351h3v1h-3zM740 350h1v3h-1zM735 359h3v1h-3zM736 358h1v3h-1zM736 356h3v1h-3zM737 355h1v3h-1zM735 361h3v1h-3zM736 360h1v3h-1zM739 355h3v1h-3zM740 354h1v3h-1zM740 357h3v1h-3zM741 356h1v3h-1zM740 357h3v1h-3zM741 356h1v3h-1zM740 358h3v1h-3zM741 357h1v3h-1zM738 362h3v1h-3zM739 361h1v3h-1zM740 360h3v1h-3zM741 359h1v3h-1zM740 361h3v1h-3zM741 360h1v3h-1zM741 360h3v1h-3zM742 359h1v3h-1zM740 363h3v1h-3zM741 362h1v3h-1zM742 361h3v1h-3zM743 360h1v3h-1zM741 363h3v1h-3zM742 362h1v3h-1zM746 353h3v1h-3zM747 352h1v3h-1zM745 358h3v1h-3zM746 357h1v3h-1zM742 363h3v1h-3zM743 362h1v3h-1zM744 359h3v1h-3zM745 358h1v3h-1zM749 352h3v1h-3zM750 351h1v3h-1zM742 365h3v1h-3zM743 364h1v3h-1zM747 357h3v1h-3zM748 356h1v3h-1zM744 365h3v1h-3zM745 364h1v3h-1zM747 358h3v1h-3zM748 357h1v3h-1zM745 363h3v1h-3zM746 362h1v3h-1zM748 359h3v1h-3zM749 358h1v3h-1zM746 364h3v1h-3zM747 363h1v3h-1zM751 353h3v1h-3zM752 352h1v3h-1zM752 353h3v1h-3zM753 352h1v3h-1zM749 360h3v1h-3zM750 359h1v3h-1zM753 352h3v1h-3zM754 351h1v3h-1zM748 363h3v1h-3zM749 362h1v3h-1zM751 357h3v1h-3zM752 356h1v3h-1zM747 366h3v1h-3zM748 365h1v3h-1zM750 361h3v1h-3zM751 360h1v3h-1zM749 363h3v1h-3zM750 362h1v3h-1zM749 365h3v1h-3zM750 364h1v3h-1zM749 367h3v1h-3zM750 366h1v3h-1zM750 363h3v1h-3zM751 362h1v3h-1zM752 361h3v1h-3zM753 360h1v3h-1zM751 364h3v1h-3zM752 363h1v3h-1zM751 364h3v1h-3zM752 363h1v3h-1zM752 363h3v1h-3zM753 362h1v3h-1zM752 364h3v1h-3zM753 363h1v3h-1zM754 361h3v1h-3zM755 360h1v3h-1zM751 366h3v1h-3zM752 365h1v3h-1zM754 362h3v1h-3zM755 361h1v3h-1zM753 365h3v1h-3zM754 364h1v3h-1zM755 361h3v1h-3zM756 360h1v3h-1zM755 364h3v1h-3zM756 363h1v3h-1zM754 366h3v1h-3zM755 365h1v3h-1zM754 364h3v1h-3zM755 363h1v3h-1zM755 365h3v1h-3zM756 364h1v3h-1zM759 357h3v1h-3zM760 356h1v3h-1zM754 367h3v1h-3zM755 366h1v3h-1zM755 368h3v1h-3zM756 367h1v3h-1zM757 363h3v1h-3zM758 362h1v3h-1zM757 364h3v1h-3zM758 363h1v3h-1zM757 365h3v1h-3zM758 364h1v3h-1zM755 370h3v1h-3zM756 369h1v3h-1zM756 367h3v1h-3zM757 366h1v3h-1zM756 370h3v1h-3zM757 369h1v3h-1zM759 364h3v1h-3zM760 363h1v3h-1zM757 369h3v1h-3zM758 368h1v3h-1zM757 371h3v1h-3zM758 370h1v3h-1zM757 371h3v1h-3zM758 370h1v3h-1zM758 368h3v1h-3zM759 367h1v3h-1zM757 372h3v1h-3zM758 371h1v3h-1zM758 370h3v1h-3zM759 369h1v3h-1zM760 367h3v1h-3zM761 366h1v3h-1zM762 364h3v1h-3zM763 363h1v3h-1zM760 369h3v1h-3zM761 368h1v3h-1zM759 372h3v1h-3zM760 371h1v3h-1zM762 367h3v1h-3zM763 366h1v3h-1zM762 367h3v1h-3zM763 366h1v3h-1zM759 373h3v1h-3zM760 372h1v3h-1zM764 366h3v1h-3zM765 365h1v3h-1zM762 369h3v1h-3zM763 368h1v3h-1zM760 373h3v1h-3zM761 372h1v3h-1zM761 372h3v1h-3zM762 371h1v3h-1zM762 368h3v1h-3zM763 367h1v3h-1zM761 372h3v1h-3zM762 371h1v3h-1zM762 372h3v1h-3zM763 371h1v3h-1zM763 369h3v1h-3zM764 368h1v3h-1zM762 372h3v1h-3zM763 371h1v3h-1zM765 363h3v1h-3zM766 362h1v3h-1zM764 367h3v1h-3zM765 366h1v3h-1zM763 374h3v1h-3zM764 373h1v3h-1zM764 373h3v1h-3zM765 372h1v3h-1zM765 370h3v1h-3zM766 369h1v3h-1zM766 367h3v1h-3zM767 366h1v3h-1zM765 374h3v1h-3zM766 373h1v3h-1zM765 372h3v1h-3zM766 371h1v3h-1zM765 371h3v1h-3zM766 370h1v3h-1zM766 374h3v1h-3zM767 373h1v3h-1zM766 372h3v1h-3zM767 371h1v3h-1zM768 367h3v1h-3zM769 366h1v3h-1zM767 375h3v1h-3zM768 374h1v3h-1zM768 369h3v1h-3zM769 368h1v3h-1zM767 375h3v1h-3zM768 374h1v3h-1zM769 371h3v1h-3zM770 370h1v3h-1zM768 376h3v1h-3zM769 375h1v3h-1zM768 373h3v1h-3zM769 372h1v3h-1zM771 368h3v1h-3zM772 367h1v3h-1zM770 371h3v1h-3zM771 370h1v3h-1zM772 363h3v1h-3zM773 362h1v3h-1zM772 368h3v1h-3zM773 367h1v3h-1zM771 372h3v1h-3zM772 371h1v3h-1zM771 369h3v1h-3zM772 368h1v3h-1zM775 362h3v1h-3zM776 361h1v3h-1zM771 376h3v1h-3zM772 375h1v3h-1zM771 375h3v1h-3zM772 374h1v3h-1zM773 372h3v1h-3zM774 371h1v3h-1zM772 377h3v1h-3zM773 376h1v3h-1zM772 375h3v1h-3zM773 374h1v3h-1zM774 371h3v1h-3zM775 370h1v3h-1zM775 370h3v1h-3zM776 369h1v3h-1zM777 363h3v1h-3zM778 362h1v3h-1zM775 372h3v1h-3zM776 371h1v3h-1zM775 372h3v1h-3zM776 371h1v3h-1zM774 375h3v1h-3zM775 374h1v3h-1zM776 373h3v1h-3zM777 372h1v3h-1zM777 370h3v1h-3zM778 369h1v3h-1zM775 376h3v1h-3zM776 375h1v3h-1zM777 372h3v1h-3zM778 371h1v3h-1zM776 376h3v1h-3zM777 375h1v3h-1zM777 372h3v1h-3zM778 371h1v3h-1zM777 377h3v1h-3zM778 376h1v3h-1zM777 376h3v1h-3zM778 375h1v3h-1zM777 375h3v1h-3zM778 374h1v3h-1zM779 372h3v1h-3zM780 371h1v3h-1zM778 378h3v1h-3zM779 377h1v3h-1zM777 378h3v1h-3zM778 377h1v3h-1zM779 376h3v1h-3zM780 375h1v3h-1zM779 375h3v1h-3zM780 374h1v3h-1zM779 376h3v1h-3zM780 375h1v3h-1zM781 375h3v1h-3zM782 374h1v3h-1zM781 374h3v1h-3zM782 373h1v3h-1zM782 370h3v1h-3zM783 369h1v3h-1zM781 377h3v1h-3zM782 376h1v3h-1zM782 375h3v1h-3zM783 374h1v3h-1zM780 379h3v1h-3zM781 378h1v3h-1zM782 378h3v1h-3zM783 377h1v3h-1zM785 367h3v1h-3zM786 366h1v3h-1zM784 371h3v1h-3zM785 370h1v3h-1zM783 378h3v1h-3zM784 377h1v3h-1zM783 379h3v1h-3zM784 378h1v3h-1zM783 379h3v1h-3zM784 378h1v3h-1zM784 379h3v1h-3zM785 378h1v3h-1zM785 374h3v1h-3zM786 373h1v3h-1zM787 370h3v1h-3zM788 369h1v3h-1zM786 374h3v1h-3zM787 373h1v3h-1zM785 380h3v1h-3zM786 379h1v3h-1zM785 378h3v1h-3zM786 377h1v3h-1zM786 379h3v1h-3zM787 378h1v3h-1zM786 380h3v1h-3zM787 379h1v3h-1zM786 379h3v1h-3zM787 378h1v3h-1zM790 370h3v1h-3zM791 369h1v3h-1zM791 369h3v1h-3zM792 368h1v3h-1zM788 378h3v1h-3zM789 377h1v3h-1zM790 374h3v1h-3zM791 373h1v3h-1zM789 379h3v1h-3zM790 378h1v3h-1zM789 378h3v1h-3zM790 377h1v3h-1zM790 379h3v1h-3zM791 378h1v3h-1zM791 376h3v1h-3zM792 375h1v3h-1zM791 376h3v1h-3zM792 375h1v3h-1zM791 379h3v1h-3zM792 378h1v3h-1zM792 376h3v1h-3zM793 375h1v3h-1zM791 378h3v1h-3zM792 377h1v3h-1zM792 378h3v1h-3zM793 377h1v3h-1zM791 382h3v1h-3zM792 381h1v3h-1zM793 377h3v1h-3zM794 376h1v3h-1zM793 378h3v1h-3zM794 377h1v3h-1zM796 372h3v1h-3zM797 371h1v3h-1zM793 379h3v1h-3zM794 378h1v3h-1zM796 374h3v1h-3zM797 373h1v3h-1zM793 383h3v1h-3zM794 382h1v3h-1zM795 376h3v1h-3zM796 375h1v3h-1zM795 382h3v1h-3zM796 381h1v3h-1zM794 383h3v1h-3zM795 382h1v3h-1zM796 378h3v1h-3zM797 377h1v3h-1zM796 383h3v1h-3zM797 382h1v3h-1zM797 378h3v1h-3zM798 377h1v3h-1zM799 373h3v1h-3zM800 372h1v3h-1zM797 378h3v1h-3zM798 377h1v3h-1zM797 379h3v1h-3zM798 378h1v3h-1zM798 374h3v1h-3zM799 373h1v3h-1zM797 384h3v1h-3zM798 383h1v3h-1zM797 383h3v1h-3zM798 382h1v3h-1zM799 374h3v1h-3zM800 373h1v3h-1zM800 375h3v1h-3zM801 374h1v3h-1zM799 381h3v1h-3zM800 380h1v3h-1zM799 378h3v1h-3zM800 377h1v3h-1zM800 382h3v1h-3zM801 381h1v3h-1zM800 378h3v1h-3zM801 377h1v3h-1zM800 380h3v1h-3zM801 379h1v3h-1zM801 380h3v1h-3zM802 379h1v3h-1zM800 383h3v1h-3zM801 382h1v3h-1zM801 382h3v1h-3zM802 381h1v3h-1zM802 381h3v1h-3zM803 380h1v3h-1zM803 375h3v1h-3zM804 374h1v3h-1zM802 382h3v1h-3zM803 381h1v3h-1zM803 381h3v1h-3zM804 380h1v3h-1zM803 383h3v1h-3zM804 382h1v3h-1zM805 373h3v1h-3zM806 372h1v3h-1zM805 378h3v1h-3zM806 377h1v3h-1zM804 384h3v1h-3zM805 383h1v3h-1zM803 385h3v1h-3zM804 384h1v3h-1zM804 385h3v1h-3zM805 384h1v3h-1zM805 384h3v1h-3zM806 383h1v3h-1zM805 382h3v1h-3zM806 381h1v3h-1zM809 371h3v1h-3zM810 370h1v3h-1zM806 384h3v1h-3zM807 383h1v3h-1zM807 379h3v1h-3zM808 378h1v3h-1zM808 379h3v1h-3zM809 378h1v3h-1zM807 383h3v1h-3zM808 382h1v3h-1zM809 374h3v1h-3zM810 373h1v3h-1zM807 387h3v1h-3zM808 386h1v3h-1zM809 380h3v1h-3zM810 379h1v3h-1zM809 382h3v1h-3zM810 381h1v3h-1zM809 385h3v1h-3zM810 384h1v3h-1zM808 387h3v1h-3zM809 386h1v3h-1zM809 383h3v1h-3zM810 382h1v3h-1zM811 381h3v1h-3zM812 380h1v3h-1zM810 386h3v1h-3zM811 385h1v3h-1zM810 386h3v1h-3zM811 385h1v3h-1zM812 383h3v1h-3zM813 382h1v3h-1zM812 380h3v1h-3zM813 379h1v3h-1zM811 384h3v1h-3zM812 383h1v3h-1zM813 381h3v1h-3zM814 380h1v3h-1zM813 380h3v1h-3zM814 379h1v3h-1zM812 384h3v1h-3zM813 383h1v3h-1zM813 385h3v1h-3zM814 384h1v3h-1zM813 387h3v1h-3zM814 386h1v3h-1zM813 384h3v1h-3zM814 383h1v3h-1zM814 386h3v1h-3zM815 385h1v3h-1zM814 385h3v1h-3zM815 384h1v3h-1zM815 384h3v1h-3zM816 383h1v3h-1zM817 377h3v1h-3zM818 376h1v3h-1zM816 382h3v1h-3zM817 381h1v3h-1zM816 382h3v1h-3zM817 381h1v3h-1zM816 385h3v1h-3zM817 384h1v3h-1zM817 384h3v1h-3zM818 383h1v3h-1zM818 381h3v1h-3zM819 380h1v3h-1zM817 387h3v1h-3zM818 386h1v3h-1zM817 388h3v1h-3zM818 387h1v3h-1zM817 389h3v1h-3zM818 388h1v3h-1zM818 382h3v1h-3zM819 381h1v3h-1zM818 383h3v1h-3zM819 382h1v3h-1zM817 389h3v1h-3zM818 388h1v3h-1zM818 387h3v1h-3zM819 386h1v3h-1zM819 381h3v1h-3zM820 380h1v3h-1zM818 386h3v1h-3zM819 385h1v3h-1zM819 387h3v1h-3zM820 386h1v3h-1zM820 379h3v1h-3zM821 378h1v3h-1zM820 385h3v1h-3zM821 384h1v3h-1zM820 388h3v1h-3zM821 387h1v3h-1zM821 380h3v1h-3zM822 379h1v3h-1zM820 388h3v1h-3zM821 387h1v3h-1zM821 390h3v1h-3zM822 389h1v3h-1zM821 387h3v1h-3zM822 386h1v3h-1zM821 386h3v1h-3zM822 385h1v3h-1zM822 389h3v1h-3zM823 388h1v3h-1zM822 389h3v1h-3zM823 388h1v3h-1zM823 375h3v1h-3zM824 374h1v3h-1zM824 382h3v1h-3zM825 381h1v3h-1zM823 389h3v1h-3zM824 388h1v3h-1zM824 384h3v1h-3zM825 383h1v3h-1zM825 378h3v1h-3zM826 377h1v3h-1zM825 380h3v1h-3zM826 379h1v3h-1zM825 383h3v1h-3zM826 382h1v3h-1zM826 382h3v1h-3zM827 381h1v3h-1zM825 387h3v1h-3zM826 386h1v3h-1zM825 390h3v1h-3zM826 389h1v3h-1zM827 386h3v1h-3zM828 385h1v3h-1zM826 389h3v1h-3zM827 388h1v3h-1zM827 382h3v1h-3zM828 381h1v3h-1zM827 390h3v1h-3zM828 389h1v3h-1zM828 378h3v1h-3zM829 377h1v3h-1zM828 385h3v1h-3zM829 384h1v3h-1zM829 382h3v1h-3zM830 381h1v3h-1zM828 387h3v1h-3zM829 386h1v3h-1zM829 377h3v1h-3zM830 376h1v3h-1zM832 380h3v1h-3zM833 379h1v3h-1zM832 379h3v1h-3zM833 378h1v3h-1zM832 380h3v1h-3zM833 379h1v3h-1zM831 390h3v1h-3zM832 389h1v3h-1zM831 390h3v1h-3zM832 389h1v3h-1zM831 389h3v1h-3zM832 388h1v3h-1zM832 390h3v1h-3zM833 389h1v3h-1zM832 391h3v1h-3zM833 390h1v3h-1zM832 387h3v1h-3zM833 386h1v3h-1zM833 391h3v1h-3zM834 390h1v3h-1zM833 387h3v1h-3zM834 386h1v3h-1zM835 382h3v1h-3zM836 381h1v3h-1zM834 388h3v1h-3zM835 387h1v3h-1zM835 385h3v1h-3zM836 384h1v3h-1zM834 388h3v1h-3zM835 387h1v3h-1zM836 387h3v1h-3zM837 386h1v3h-1zM836 386h3v1h-3zM837 385h1v3h-1zM836 386h3v1h-3zM837 385h1v3h-1zM837 386h3v1h-3zM838 385h1v3h-1zM836 390h3v1h-3zM837 389h1v3h-1zM836 389h3v1h-3zM837 388h1v3h-1zM838 386h3v1h-3zM839 385h1v3h-1zM838 387h3v1h-3zM839 386h1v3h-1zM838 387h3v1h-3zM839 386h1v3h-1zM839 389h3v1h-3zM840 388h1v3h-1zM838 389h3v1h-3zM839 388h1v3h-1zM840 384h3v1h-3zM841 383h1v3h-1zM840 386h3v1h-3zM841 385h1v3h-1zM839 392h3v1h-3zM840 391h1v3h-1zM839 390h3v1h-3zM840 389h1v3h-1zM840 391h3v1h-3zM841 390h1v3h-1zM841 389h3v1h-3zM842 388h1v3h-1zM842 385h3v1h-3zM843 384h1v3h-1zM841 393h3v1h-3zM842 392h1v3h-1zM841 392h3v1h-3zM842 391h1v3h-1zM842 386h3v1h-3zM843 385h1v3h-1zM843 387h3v1h-3zM844 386h1v3h-1zM842 392h3v1h-3zM843 391h1v3h-1zM842 392h3v1h-3zM843 391h1v3h-1zM844 387h3v1h-3zM845 386h1v3h-1zM844 388h3v1h-3zM845 387h1v3h-1zM843 393h3v1h-3zM844 392h1v3h-1zM845 388h3v1h-3zM846 387h1v3h-1zM844 393h3v1h-3zM845 392h1v3h-1zM845 387h3v1h-3zM846 386h1v3h-1zM845 392h3v1h-3zM846 391h1v3h-1zM846 387h3v1h-3zM847 386h1v3h-1zM846 387h3v1h-3zM847 386h1v3h-1zM847 390h3v1h-3zM848 389h1v3h-1zM847 391h3v1h-3zM848 390h1v3h-1zM847 387h3v1h-3zM848 386h1v3h-1zM849 384h3v1h-3zM850 383h1v3h-1zM848 390h3v1h-3zM849 389h1v3h-1zM848 388h3v1h-3zM849 387h1v3h-1zM849 391h3v1h-3zM850 390h1v3h-1zM849 390h3v1h-3zM850 389h1v3h-1zM849 391h3v1h-3zM850 390h1v3h-1zM850 387h3v1h-3zM851 386h1v3h-1zM850 388h3v1h-3zM851 387h1v3h-1zM850 390h3v1h-3zM851 389h1v3h-1zM851 391h3v1h-3zM852 390h1v3h-1zM851 391h3v1h-3zM852 390h1v3h-1zM851 393h3v1h-3zM852 392h1v3h-1zM852 390h3v1h-3zM853 389h1v3h-1zM852 385h3v1h-3zM853 384h1v3h-1zM852 389h3v1h-3zM853 388h1v3h-1zM853 392h3v1h-3zM854 391h1v3h-1zM853 391h3v1h-3zM854 390h1v3h-1zM854 384h3v1h-3zM855 383h1v3h-1zM854 394h3v1h-3zM855 393h1v3h-1zM854 385h3v1h-3zM855 384h1v3h-1zM854 392h3v1h-3zM855 391h1v3h-1zM855 389h3v1h-3zM856 388h1v3h-1zM855 394h3v1h-3zM856 393h1v3h-1zM855 387h3v1h-3zM856 386h1v3h-1zM856 393h3v1h-3zM857 392h1v3h-1zM856 394h3v1h-3zM857 393h1v3h-1zM856 393h3v1h-3zM857 392h1v3h-1zM857 393h3v1h-3zM858 392h1v3h-1zM857 394h3v1h-3zM858 393h1v3h-1zM857 393h3v1h-3zM858 392h1v3h-1zM858 390h3v1h-3zM859 389h1v3h-1zM858 392h3v1h-3zM859 391h1v3h-1zM858 391h3v1h-3zM859 390h1v3h-1zM859 395h3v1h-3zM860 394h1v3h-1zM859 391h3v1h-3zM860 390h1v3h-1zM859 394h3v1h-3zM860 393h1v3h-1zM860 395h3v1h-3zM861 394h1v3h-1zM860 395h3v1h-3zM861 394h1v3h-1zM861 394h3v1h-3zM862 393h1v3h-1zM861 393h3v1h-3zM862 392h1v3h-1zM862 395h3v1h-3zM863 394h1v3h-1zM862 395h3v1h-3zM863 394h1v3h-1zM863 395h3v1h-3zM864 394h1v3h-1zM863 395h3v1h-3zM864 394h1v3h-1zM865 394h3v1h-3zM866 393h1v3h-1zM865 394h3v1h-3zM866 393h1v3h-1zM866 395h3v1h-3zM867 394h1v3h-1zM866 393h3v1h-3zM867 392h1v3h-1zM867 395h3v1h-3zM868 394h1v3h-1zM867 394h3v1h-3zM868 393h1v3h-1zM868 392h3v1h-3zM869 391h1v3h-1zM867 395h3v1h-3zM868 394h1v3h-1zM869 395h3v1h-3zM870 394h1v3h-1zM868 396h3v1h-3zM869 395h1v3h-1zM869 395h3v1h-3zM870 394h1v3h-1zM869 396h3v1h-3zM870 395h1v3h-1zM871 395h3v1h-3zM872 394h1v3h-1zM870 396h3v1h-3zM871 395h1v3h-1zM871 396h3v1h-3zM872 395h1v3h-1zM872 396h3v1h-3zM873 395h1v3h-1zM873 395h3v1h-3zM874 394h1v3h-1zM873 395h3v1h-3zM874 394h1v3h-1zM874 394h3v1h-3zM875 393h1v3h-1zM873 396h3v1h-3zM874 395h1v3h-1zM875 396h3v1h-3zM876 395h1v3h-1zM875 395h3v1h-3zM876 394h1v3h-1zM876 396h3v1h-3zM877 395h1v3h-1zM876 393h3v1h-3zM877 392h1v3h-1zM876 397h3v1h-3zM877 396h1v3h-1zM877 393h3v1h-3zM878 392h1v3h-1zM877 398h3v1h-3zM878 397h1v3h-1zM877 397h3v1h-3zM878 396h1v3h-1zM878 398h3v1h-3zM879 397h1v3h-1zM878 397h3v1h-3zM879 396h1v3h-1zM879 394h3v1h-3zM880 393h1v3h-1zM879 395h3v1h-3zM880 394h1v3h-1zM880 397h3v1h-3zM881 396h1v3h-1zM880 398h3v1h-3zM881 397h1v3h-1zM881 397h3v1h-3zM882 396h1v3h-1zM881 396h3v1h-3zM882 395h1v3h-1zM882 397h3v1h-3zM883 396h1v3h-1zM882 397h3v1h-3zM883 396h1v3h-1zM883 398h3v1h-3zM884 397h1v3h-1zM883 396h3v1h-3zM884 395h1v3h-1zM884 396h3v1h-3zM885 395h1v3h-1zM884 396h3v1h-3zM885 395h1v3h-1zM886 395h3v1h-3zM887 394h1v3h-1zM885 397h3v1h-3zM886 396h1v3h-1zM886 397h3v1h-3zM887 396h1v3h-1zM886 396h3v1h-3zM887 395h1v3h-1zM887 398h3v1h-3zM888 397h1v3h-1zM887 398h3v1h-3zM888 397h1v3h-1zM888 398h3v1h-3zM889 397h1v3h-1zM889 397h3v1h-3zM890 396h1v3h-1zM889 398h3v1h-3zM890 397h1v3h-1zM889 399h3v1h-3zM890 398h1v3h-1zM891 398h3v1h-3zM892 397h1v3h-1zM891 398h3v1h-3zM892 397h1v3h-1zM892 395h3v1h-3zM893 394h1v3h-1zM891 398h3v1h-3zM892 397h1v3h-1zM893 396h3v1h-3zM894 395h1v3h-1zM893 396h3v1h-3zM894 395h1v3h-1zM894 398h3v1h-3zM895 397h1v3h-1zM894 395h3v1h-3zM895 394h1v3h-1zM895 398h3v1h-3zM896 397h1v3h-1zM895 398h3v1h-3zM896 397h1v3h-1zM896 398h3v1h-3zM897 397h1v3h-1zM896 398h3v1h-3zM897 397h1v3h-1zM897 398h3v1h-3zM898 397h1v3h-1zM897 399h3v1h-3zM898 398h1v3h-1zM898 397h3v1h-3zM899 396h1v3h-1zM898 398h3v1h-3zM899 397h1v3h-1zM899 398h3v1h-3zM900 397h1v3h-1zM899 399h3v1h-3zM900 398h1v3h-1zM902 399h3v1h-3zM903 398h1v3h-1zM913 399h3v1h-3zM914 398h1v3h-1zM916 401h3v1h-3zM917 400h1v3h-1zM917 400h3v1h-3zM918 399h1v3h-1zM927 402h3v1h-3zM928 401h1v3h-1zM928 400h3v1h-3zM929 399h1v3h-1zM930 401h3v1h-3zM931 400h1v3h-1zM934 402h3v1h-3zM935 401h1v3h-1zM935 401h3v1h-3zM936 400h1v3h-1zM940 402h3v1h-3zM941 401h1v3h-1zM941 402h3v1h-3zM942 401h1v3h-1zM942 401h3v1h-3zM943 400h1v3h-1zM947 401h3v1h-3zM948 400h1v3h-1zM949 401h3v1h-3zM950 400h1v3h-1zM950 400h3v1h-3zM951 399h1v3h-1zM958 402h3v1h-3zM959 401h1v3h-1zM968 402h3v1h-3zM969 401h1v3h-1zM975 403h3v1h-3zM976 402h1v3h-1zM976 403h3v1h-3zM977 402h1v3h-1zM977 402h3v1h-3zM978 401h1v3h-1zM979 402h3v1h-3zM980 401h1v3h-1zM988 403h3v1h-3zM989 402h1v3h-1zM989 402h3v1h-3zM990 401h1v3h-1zM991 404h3v1h-3zM992 403h1v3h-1zM992 403h3v1h-3zM993 402h1v3h-1zM994 403h3v1h-3zM995 402h1v3h-1zM996 401h3v1h-3zM997 400h1v3h-1z"/>
<polyline points="697,286 697,296 699,305 702,323 708,333 715,343 722,352 730,360 734,363 750,371 761,376 771,378.5 781.6,381.6 789,384 796.5,386.5 802.6,387.7 818,391.5 830,392.5 843.6,395.4 852.5,396.5 865,397.5 880,400 900.5,401.5 906,402.5 916.5,403.3 932.5,404.3 942,404.5 958,405.2 970,405.4 981,406 1006,406.2 1022,406.2 1040,406.2" fill="none" stroke="#800000" stroke-width="1" shape-rendering="auto"/>
<path fill="#f00" d="M734 61h3v1h-3zM735 60h1v3h-1zM742 111h3v1h-3zM743 110h1v3h-1zM780 138h3v1h-3zM781 137h1v3h-1zM901 58h3v1h-3zM902 57h1v3h-1zM865 81h3v1h-3zM866 80h1v3h-1zM866 102h3v1h-3zM867 101h1v3h-1zM868 100h3v1h-3zM869 99h1v3h-1zM718 200h3v1h-3zM719 199h1v3h-1zM721 211h3v1h-3zM722 210h1v3h-1zM722 215h3v1h-3zM723 214h1v3h-1zM713 216h3v1h-3zM714 215h1v3h-1zM714 214h3v1h-3zM715 213h1v3h-1zM719 219h3v1h-3zM720 218h1v3h-1zM731 227h3v1h-3zM732 226h1v3h-1zM710 227h3v1h-3zM711 226h1v3h-1zM708 230h3v1h-3zM709 229h1v3h-1zM707 233h3v1h-3zM708 232h1v3h-1zM710 234h3v1h-3zM711 233h1v3h-1zM706 237h3v1h-3zM707 236h1v3h-1zM709 237h3v1h-3zM710 236h1v3h-1zM710 239h3v1h-3zM711 238h1v3h-1zM707 241h3v1h-3zM708 240h1v3h-1zM709 243h3v1h-3zM710 242h1v3h-1zM701 239h3v1h-3zM702 238h1v3h-1zM700 242h3v1h-3zM701 241h1v3h-1zM705 245h3v1h-3zM706 244h1v3h-1zM703 247h3v1h-3zM704 246h1v3h-1zM699 249h3v1h-3zM700 248h1v3h-1zM702 249h3v1h-3zM703 248h1v3h-1zM704 251h3v1h-3zM705 250h1v3h-1zM701 252h3v1h-3zM702 251h1v3h-1zM702 255h3v1h-3zM703 254h1v3h-1zM700 257h3v1h-3zM701 256h1v3h-1zM704 257h3v1h-3zM705 256h1v3h-1zM701 260h3v1h-3zM702 259h1v3h-1zM699 262h3v1h-3zM700 261h1v3h-1zM705 263h3v1h-3zM706 262h1v3h-1zM700 265h3v1h-3zM701 264h1v3h-1zM752 252h3v1h-3zM753 251h1v3h-1zM750 262h3v1h-3zM751 261h1v3h-1zM749 264h3v1h-3zM750 263h1v3h-1zM823 160h3v1h-3zM824 159h1v3h-1zM826 164h3v1h-3zM827 163h1v3h-1zM857 170h3v1h-3zM858 169h1v3h-1zM858 172h3v1h-3zM859 171h1v3h-1zM822 196h3v1h-3zM823 195h1v3h-1zM798 208h3v1h-3zM799 207h1v3h-1zM804 209h3v1h-3zM805 208h1v3h-1zM795 216h3v1h-3zM796 215h1v3h-1zM815 216h3v1h-3zM816 215h1v3h-1zM874 252h3v1h-3zM875 251h1v3h-1zM745 269h3v1h-3zM746 268h1v3h-1zM744 274h3v1h-3zM745 273h1v3h-1zM776 278h3v1h-3zM777 277h1v3h-1zM731 311h3v1h-3zM732 310h1v3h-1zM733 310h3v1h-3zM734 309h1v3h-1zM732 313h3v1h-3zM733 312h1v3h-1zM747 309h3v1h-3zM748 308h1v3h-1zM734 323h3v1h-3zM735 322h1v3h-1zM734 328h3v1h-3zM735 327h1v3h-1zM738 328h3v1h-3zM739 327h1v3h-1zM751 321h3v1h-3zM752 320h1v3h-1zM757 325h3v1h-3zM758 324h1v3h-1zM764 325h3v1h-3zM765 324h1v3h-1zM758 329h3v1h-3zM759 328h1v3h-1zM775 329h3v1h-3zM776 328h1v3h-1zM711 299h3v1h-3zM712 298h1v3h-1zM710 298h3v1h-3zM711 297h1v3h-1zM704 307h3v1h-3zM705 306h1v3h-1zM713 305h3v1h-3zM714 304h1v3h-1zM715 307h3v1h-3zM716 306h1v3h-1zM714 309h3v1h-3zM715 308h1v3h-1zM721 311h3v1h-3zM722 310h1v3h-1zM729 313h3v1h-3zM730 312h1v3h-1zM732 310h3v1h-3zM733 309h1v3h-1zM734 310h3v1h-3zM735 309h1v3h-1zM733 313h3v1h-3zM734 312h1v3h-1zM746 309h3v1h-3zM747 308h1v3h-1zM707 316h3v1h-3zM708 315h1v3h-1zM707 319h3v1h-3zM708 318h1v3h-1zM713 316h3v1h-3zM714 315h1v3h-1zM713 319h3v1h-3zM714 318h1v3h-1zM714 321h3v1h-3zM715 320h1v3h-1zM715 323h3v1h-3zM716 322h1v3h-1zM724 319h3v1h-3zM725 318h1v3h-1zM734 323h3v1h-3zM735 322h1v3h-1zM728 326h3v1h-3zM729 325h1v3h-1zM734 328h3v1h-3zM735 327h1v3h-1zM737 328h3v1h-3zM738 327h1v3h-1zM731 331h3v1h-3zM732 330h1v3h-1zM716 328h3v1h-3zM717 327h1v3h-1zM718 330h3v1h-3zM719 329h1v3h-1zM723 337h3v1h-3zM724 336h1v3h-1zM741 336h3v1h-3zM742 335h1v3h-1zM734 339h3v1h-3zM735 338h1v3h-1zM737 340h3v1h-3zM738 339h1v3h-1zM737 343h3v1h-3zM738 342h1v3h-1zM733 344h3v1h-3zM734 343h1v3h-1zM740 347h3v1h-3zM741 346h1v3h-1zM742 350h3v1h-3zM743 349h1v3h-1zM745 350h3v1h-3zM746 349h1v3h-1zM727 341h3v1h-3zM728 340h1v3h-1zM730 345h3v1h-3zM731 344h1v3h-1zM751 321h3v1h-3zM752 320h1v3h-1zM756 325h3v1h-3zM757 324h1v3h-1zM758 329h3v1h-3zM759 328h1v3h-1zM755 331h3v1h-3zM756 330h1v3h-1zM764 325h3v1h-3zM765 324h1v3h-1zM775 329h3v1h-3zM776 328h1v3h-1zM766 334h3v1h-3zM767 333h1v3h-1zM754 338h3v1h-3zM755 337h1v3h-1zM780 334h3v1h-3zM781 333h1v3h-1zM786 335h3v1h-3zM787 334h1v3h-1zM790 334h3v1h-3zM791 333h1v3h-1zM791 328h3v1h-3zM792 327h1v3h-1zM795 327h3v1h-3zM796 326h1v3h-1zM803 322h3v1h-3zM804 321h1v3h-1zM808 317h3v1h-3zM809 316h1v3h-1zM810 325h3v1h-3zM811 324h1v3h-1zM811 336h3v1h-3zM812 335h1v3h-1zM797 336h3v1h-3zM798 335h1v3h-1zM799 339h3v1h-3zM800 338h1v3h-1zM749 345h3v1h-3zM750 344h1v3h-1zM764 344h3v1h-3zM765 343h1v3h-1zM774 343h3v1h-3zM775 342h1v3h-1zM778 344h3v1h-3zM779 343h1v3h-1zM778 346h3v1h-3zM779 345h1v3h-1zM782 345h3v1h-3zM783 344h1v3h-1zM804 345h3v1h-3zM805 344h1v3h-1zM757 350h3v1h-3zM758 349h1v3h-1zM761 351h3v1h-3zM762 350h1v3h-1zM777 350h3v1h-3zM778 349h1v3h-1zM797 354h3v1h-3zM798 353h1v3h-1zM774 357h3v1h-3zM775 356h1v3h-1zM778 359h3v1h-3zM779 358h1v3h-1zM774 364h3v1h-3zM775 363h1v3h-1zM778 364h3v1h-3zM779 363h1v3h-1zM788 367h3v1h-3zM789 366h1v3h-1zM791 369h3v1h-3zM792 368h1v3h-1zM797 367h3v1h-3zM798 366h1v3h-1zM802 369h3v1h-3zM803 368h1v3h-1zM803 363h3v1h-3zM804 362h1v3h-1zM808 367h3v1h-3zM809 366h1v3h-1zM812 365h3v1h-3zM813 364h1v3h-1zM808 370h3v1h-3zM809 369h1v3h-1zM746 350h3v1h-3zM747 349h1v3h-1zM745 348h3v1h-3zM746 347h1v3h-1zM865 277h3v1h-3zM866 276h1v3h-1zM875 279h3v1h-3zM876 278h1v3h-1zM819 310h3v1h-3zM820 309h1v3h-1zM809 313h3v1h-3zM810 312h1v3h-1zM829 322h3v1h-3zM830 321h1v3h-1zM829 323h3v1h-3zM830 322h1v3h-1zM834 324h3v1h-3zM835 323h1v3h-1zM839 325h3v1h-3zM840 324h1v3h-1zM842 321h3v1h-3zM843 320h1v3h-1zM818 330h3v1h-3zM819 329h1v3h-1zM829 329h3v1h-3zM830 328h1v3h-1zM831 331h3v1h-3zM832 330h1v3h-1zM837 334h3v1h-3zM838 333h1v3h-1zM838 335h3v1h-3zM839 334h1v3h-1zM845 331h3v1h-3zM846 330h1v3h-1zM826 342h3v1h-3zM827 341h1v3h-1zM826 344h3v1h-3zM827 343h1v3h-1zM842 343h3v1h-3zM843 342h1v3h-1zM843 342h3v1h-3zM844 341h1v3h-1zM848 346h3v1h-3zM849 345h1v3h-1zM867 338h3v1h-3zM868 337h1v3h-1zM870 349h3v1h-3zM871 348h1v3h-1zM855 355h3v1h-3zM856 354h1v3h-1zM859 351h3v1h-3zM860 350h1v3h-1zM861 362h3v1h-3zM862 361h1v3h-1zM865 359h3v1h-3zM866 358h1v3h-1zM873 365h3v1h-3zM874 364h1v3h-1zM875 373h3v1h-3zM876 372h1v3h-1zM820 353h3v1h-3zM821 352h1v3h-1zM833 370h3v1h-3zM834 369h1v3h-1zM824 372h3v1h-3zM825 371h1v3h-1zM815 374h3v1h-3zM816 373h1v3h-1zM828 376h3v1h-3zM829 375h1v3h-1zM843 376h3v1h-3zM844 375h1v3h-1zM848 376h3v1h-3zM849 375h1v3h-1zM812 365h3v1h-3zM813 364h1v3h-1zM810 367h3v1h-3zM811 366h1v3h-1zM815 373h3v1h-3zM816 372h1v3h-1zM824 371h3v1h-3zM825 370h1v3h-1zM833 369h3v1h-3zM834 368h1v3h-1zM823 375h3v1h-3zM824 374h1v3h-1zM829 375h3v1h-3zM830 374h1v3h-1zM829 378h3v1h-3zM830 377h1v3h-1zM830 381h3v1h-3zM831 380h1v3h-1zM816 382h3v1h-3zM817 381h1v3h-1zM820 381h3v1h-3zM821 380h1v3h-1zM837 380h3v1h-3zM838 379h1v3h-1zM843 375h3v1h-3zM844 374h1v3h-1zM848 375h3v1h-3zM849 374h1v3h-1zM853 376h3v1h-3zM854 375h1v3h-1zM843 380h3v1h-3zM844 379h1v3h-1zM851 380h3v1h-3zM852 379h1v3h-1zM847 381h3v1h-3zM848 380h1v3h-1zM854 382h3v1h-3zM855 381h1v3h-1zM861 363h3v1h-3zM862 362h1v3h-1zM865 360h3v1h-3zM866 359h1v3h-1zM861 377h3v1h-3zM862 376h1v3h-1zM867 376h3v1h-3zM868 375h1v3h-1zM868 380h3v1h-3zM869 379h1v3h-1zM857 388h3v1h-3zM858 387h1v3h-1zM844 384h3v1h-3zM845 383h1v3h-1zM841 385h3v1h-3zM842 384h1v3h-1zM849 384h3v1h-3zM850 383h1v3h-1zM836 384h3v1h-3zM837 383h1v3h-1zM824 385h3v1h-3zM825 384h1v3h-1zM878 364h3v1h-3zM879 363h1v3h-1zM878 371h3v1h-3zM879 370h1v3h-1zM887 372h3v1h-3zM888 371h1v3h-1zM891 371h3v1h-3zM892 370h1v3h-1zM895 370h3v1h-3zM896 369h1v3h-1zM885 375h3v1h-3zM886 374h1v3h-1zM917 371h3v1h-3zM918 370h1v3h-1zM924 372h3v1h-3zM925 371h1v3h-1zM916 375h3v1h-3zM917 374h1v3h-1zM925 375h3v1h-3zM926 374h1v3h-1zM876 372h3v1h-3zM877 371h1v3h-1zM877 371h3v1h-3zM878 370h1v3h-1zM886 372h3v1h-3zM887 371h1v3h-1zM891 371h3v1h-3zM892 370h1v3h-1zM884 375h3v1h-3zM885 374h1v3h-1zM879 378h3v1h-3zM880 377h1v3h-1zM887 378h3v1h-3zM888 377h1v3h-1zM896 380h3v1h-3zM897 379h1v3h-1zM884 382h3v1h-3zM885 381h1v3h-1zM887 385h3v1h-3zM888 384h1v3h-1zM873 385h3v1h-3zM874 384h1v3h-1zM917 371h3v1h-3zM918 370h1v3h-1zM924 372h3v1h-3zM925 371h1v3h-1zM916 376h3v1h-3zM917 375h1v3h-1zM925 376h3v1h-3zM926 375h1v3h-1zM913 387h3v1h-3zM914 386h1v3h-1zM920 386h3v1h-3zM921 385h1v3h-1zM909 390h3v1h-3zM910 389h1v3h-1zM913 392h3v1h-3zM914 391h1v3h-1zM922 392h3v1h-3zM923 391h1v3h-1zM900 392h3v1h-3zM901 391h1v3h-1zM902 393h3v1h-3zM903 392h1v3h-1zM901 397h3v1h-3zM902 396h1v3h-1zM917 396h3v1h-3zM918 395h1v3h-1zM925 395h3v1h-3zM926 394h1v3h-1zM922 398h3v1h-3zM923 397h1v3h-1zM927 399h3v1h-3zM928 398h1v3h-1zM921 400h3v1h-3zM922 399h1v3h-1zM935 390h3v1h-3zM936 389h1v3h-1zM935 393h3v1h-3zM936 392h1v3h-1zM946 386h3v1h-3zM947 385h1v3h-1zM944 398h3v1h-3zM945 397h1v3h-1zM946 400h3v1h-3zM947 399h1v3h-1zM951 400h3v1h-3zM952 399h1v3h-1zM954 400h3v1h-3zM955 399h1v3h-1zM962 397h3v1h-3zM963 396h1v3h-1zM963 400h3v1h-3zM964 399h1v3h-1zM968 399h3v1h-3zM969 398h1v3h-1zM980 388h3v1h-3zM981 387h1v3h-1zM985 397h3v1h-3zM986 396h1v3h-1zM985 401h3v1h-3zM986 400h1v3h-1zM1004 401h3v1h-3zM1005 400h1v3h-1z"/>
<path fill="#800000" d="M694 286h7v7h-7zM694 288h7v7h-7zM694 290h7v7h-7zM694 291h7v7h-7zM694 293h7v7h-7zM694 295h7v7h-7zM695 296h7v7h-7zM695 297h7v7h-7zM695 299h7v7h-7zM696 301h7v7h-7zM696 302h7v7h-7zM696 303h7v7h-7zM697 305h7v7h-7zM697 307h7v7h-7zM697 308h7v7h-7zM697 309h7v7h-7zM697 311h7v7h-7zM698 313h7v7h-7zM698 314h7v7h-7zM698 315h7v7h-7zM699 317h7v7h-7zM699 319h7v7h-7zM699 320h7v7h-7zM700 321h7v7h-7zM701 323h7v7h-7zM702 324h7v7h-7zM702 326h7v7h-7zM703 327h7v7h-7zM704 329h7v7h-7zM705 330h7v7h-7zM706 331h7v7h-7zM707 333h7v7h-7zM708 334h7v7h-7zM709 335h7v7h-7zM709 336h7v7h-7zM710 337h7v7h-7zM711 339h7v7h-7zM712 340h7v7h-7zM713 341h7v7h-7zM714 343h7v7h-7zM715 344h7v7h-7zM716 345h7v7h-7zM717 346h7v7h-7zM718 348h7v7h-7zM719 349h7v7h-7zM720 350h7v7h-7zM721 351h7v7h-7zM722 352h7v7h-7zM724 354h7v7h-7zM725 355h7v7h-7zM726 356h7v7h-7zM727 357h7v7h-7zM728 358h7v7h-7zM730 359h7v7h-7zM731 360h7v7h-7zM758 373h7v7h-7zM766 374h7v7h-7zM770 377h7v7h-7zM779 379h7v7h-7zM786 381h7v7h-7zM793 383h7v7h-7zM800 385h7v7h-7zM815 388h7v7h-7zM827 389h7v7h-7zM841 392h7v7h-7zM849 393h7v7h-7zM897 399h7v7h-7zM903 399h7v7h-7zM913 400h7v7h-7zM929 401h7v7h-7zM939 401h7v7h-7zM956 403h7v7h-7zM969 403h7v7h-7zM978 403h7v7h-7zM999 403h7v7h-7zM1006 403h7v7h-7zM1015 403h7v7h-7zM1022 403h7v7h-7z"/>
</g>
<rect x="53" y="45" width="373" height="1" fill="#000"/>
<rect x="53" y="484" width="373" height="1" fill="#000"/>
<rect x="53" y="45" width="1" height="440" fill="#000"/>
<rect x="425" y="45" width="1" height="440" fill="#000"/>
<rect x="690" y="45" width="373" height="1" fill="#000"/>
<rect x="690" y="484" width="373" height="1" fill="#000"/>
<rect x="690" y="45" width="1" height="440" fill="#000"/>
<rect x="1062" y="45" width="1" height="440" fill="#000"/>
<rect x="284" y="300" width="31" height="21" fill="#fff"/>
<rect x="284" y="300" width="7" height="1" fill="#000"/>
<rect x="298" y="300" width="17" height="1" fill="#000"/>
<rect x="284" y="320" width="16" height="1" fill="#000"/>
<rect x="307" y="320" width="8" height="1" fill="#000"/>
<rect x="314" y="300" width="1" height="5" fill="#000"/>
<rect x="314" y="312" width="1" height="9" fill="#000"/>
<rect x="284" y="300" width="1" height="7" fill="#000"/>
<rect x="284" y="318" width="1" height="3" fill="#000"/>
<rect x="281" y="307" width="7" height="7" fill="#008000"/>
<path fill="#000" d="M294 304h1v1h-1zM292 305h1v1h-1zM293 305h1v1h-1zM294 305h1v1h-1zM294 306h1v1h-1zM294 307h1v1h-1zM294 308h1v1h-1zM294 309h1v1h-1zM294 310h1v1h-1zM294 311h1v1h-1zM294 312h1v1h-1zM294 313h1v1h-1zM294 314h1v1h-1zM294 315h1v1h-1z"/>
<rect x="303" y="156" width="31" height="21" fill="#fff"/>
<rect x="303" y="156" width="7" height="1" fill="#000"/>
<rect x="317" y="156" width="17" height="1" fill="#000"/>
<rect x="303" y="176" width="16" height="1" fill="#000"/>
<rect x="326" y="176" width="8" height="1" fill="#000"/>
<rect x="333" y="156" width="1" height="5" fill="#000"/>
<rect x="333" y="168" width="1" height="9" fill="#000"/>
<rect x="303" y="156" width="1" height="7" fill="#000"/>
<rect x="303" y="174" width="1" height="3" fill="#000"/>
<rect x="300" y="163" width="7" height="7" fill="#008000"/>
<path fill="#000" d="M312 160h1v1h-1zM313 160h1v1h-1zM314 160h1v1h-1zM311 161h1v1h-1zM315 161h1v1h-1zM310 162h1v1h-1zM316 162h1v1h-1zM310 163h1v1h-1zM316 163h1v1h-1zM316 164h1v1h-1zM315 165h1v1h-1zM314 166h1v1h-1zM313 167h1v1h-1zM312 168h1v1h-1zM311 169h1v1h-1zM310 170h1v1h-1zM310 171h1v1h-1zM311 171h1v1h-1zM312 171h1v1h-1zM313 171h1v1h-1zM314 171h1v1h-1zM315 171h1v1h-1zM316 171h1v1h-1z"/>
<rect x="105" y="368" width="31" height="21" fill="#fff"/>
<rect x="105" y="368" width="7" height="1" fill="#000"/>
<rect x="119" y="368" width="17" height="1" fill="#000"/>
<rect x="105" y="388" width="16" height="1" fill="#000"/>
<rect x="128" y="388" width="8" height="1" fill="#000"/>
<rect x="135" y="368" width="1" height="5" fill="#000"/>
<rect x="135" y="380" width="1" height="9" fill="#000"/>
<rect x="105" y="368" width="1" height="7" fill="#000"/>
<rect x="105" y="386" width="1" height="3" fill="#000"/>
<rect x="102" y="375" width="7" height="7" fill="#008000"/>
<path fill="#000" d="M114 372h1v1h-1zM115 372h1v1h-1zM116 372h1v1h-1zM113 373h1v1h-1zM117 373h1v1h-1zM112 374h1v1h-1zM118 374h1v1h-1zM112 375h1v1h-1zM118 375h1v1h-1zM117 376h1v1h-1zM114 377h1v1h-1zM115 377h1v1h-1zM116 377h1v1h-1zM117 378h1v1h-1zM118 379h1v1h-1zM112 380h1v1h-1zM118 380h1v1h-1zM112 381h1v1h-1zM118 381h1v1h-1zM113 382h1v1h-1zM117 382h1v1h-1zM114 383h1v1h-1zM115 383h1v1h-1zM116 383h1v1h-1z"/>
<rect x="205" y="376" width="31" height="21" fill="#fff"/>
<rect x="205" y="376" width="7" height="1" fill="#000"/>
<rect x="219" y="376" width="17" height="1" fill="#000"/>
<rect x="205" y="396" width="16" height="1" fill="#000"/>
<rect x="228" y="396" width="8" height="1" fill="#000"/>
<rect x="235" y="376" width="1" height="5" fill="#000"/>
<rect x="235" y="388" width="1" height="9" fill="#000"/>
<rect x="205" y="376" width="1" height="7" fill="#000"/>
<rect x="205" y="394" width="1" height="3" fill="#000"/>
<rect x="202" y="383" width="7" height="7" fill="#008000"/>
<path fill="#000" d="M217 380h1v1h-1zM216 381h1v1h-1zM217 381h1v1h-1zM215 382h1v1h-1zM217 382h1v1h-1zM215 383h1v1h-1zM217 383h1v1h-1zM214 384h1v1h-1zM217 384h1v1h-1zM213 385h1v1h-1zM217 385h1v1h-1zM213 386h1v1h-1zM217 386h1v1h-1zM212 387h1v1h-1zM217 387h1v1h-1zM212 388h1v1h-1zM213 388h1v1h-1zM214 388h1v1h-1zM215 388h1v1h-1zM216 388h1v1h-1zM217 388h1v1h-1zM218 388h1v1h-1zM217 389h1v1h-1zM217 390h1v1h-1zM217 391h1v1h-1z"/>
<g clip-path="url(#rclip)">
<rect x="697" y="276" width="31" height="21" fill="#fff"/>
<rect x="697" y="276" width="31" height="1" fill="#000"/>
<rect x="697" y="296" width="31" height="1" fill="#000"/>
<rect x="697" y="276" width="1" height="21" fill="#000"/>
<rect x="727" y="276" width="1" height="21" fill="#000"/>
<rect x="694" y="283" width="7" height="7" fill="#008000"/>
<path fill="#000" d="M706 280h1v1h-1zM707 280h1v1h-1zM708 280h1v1h-1zM705 281h1v1h-1zM709 281h1v1h-1zM704 282h1v1h-1zM710 282h1v1h-1zM704 283h1v1h-1zM710 283h1v1h-1zM710 284h1v1h-1zM709 285h1v1h-1zM708 286h1v1h-1zM707 287h1v1h-1zM706 288h1v1h-1zM705 289h1v1h-1zM704 290h1v1h-1zM704 291h1v1h-1zM705 291h1v1h-1zM706 291h1v1h-1zM707 291h1v1h-1zM708 291h1v1h-1zM709 291h1v1h-1zM710 291h1v1h-1z"/>
<rect x="734" y="353" width="31" height="21" fill="#fff"/>
<rect x="734" y="353" width="31" height="1" fill="#000"/>
<rect x="734" y="373" width="31" height="1" fill="#000"/>
<rect x="734" y="353" width="1" height="21" fill="#000"/>
<rect x="764" y="353" width="1" height="21" fill="#000"/>
<rect x="731" y="360" width="7" height="7" fill="#008000"/>
<path fill="#000" d="M744 357h1v1h-1zM742 358h1v1h-1zM743 358h1v1h-1zM744 358h1v1h-1zM744 359h1v1h-1zM744 360h1v1h-1zM744 361h1v1h-1zM744 362h1v1h-1zM744 363h1v1h-1zM744 364h1v1h-1zM744 365h1v1h-1zM744 366h1v1h-1zM744 367h1v1h-1zM744 368h1v1h-1z"/>
<rect x="865" y="387" width="31" height="21" fill="#fff"/>
<rect x="865" y="387" width="31" height="1" fill="#000"/>
<rect x="865" y="407" width="31" height="1" fill="#000"/>
<rect x="865" y="387" width="1" height="21" fill="#000"/>
<rect x="895" y="387" width="1" height="21" fill="#000"/>
<rect x="862" y="394" width="7" height="7" fill="#008000"/>
<path fill="#000" d="M877 391h1v1h-1zM876 392h1v1h-1zM877 392h1v1h-1zM875 393h1v1h-1zM877 393h1v1h-1zM875 394h1v1h-1zM877 394h1v1h-1zM874 395h1v1h-1zM877 395h1v1h-1zM873 396h1v1h-1zM877 396h1v1h-1zM873 397h1v1h-1zM877 397h1v1h-1zM872 398h1v1h-1zM877 398h1v1h-1zM872 399h1v1h-1zM873 399h1v1h-1zM874 399h1v1h-1zM875 399h1v1h-1zM876 399h1v1h-1zM877 399h1v1h-1zM878 399h1v1h-1zM877 400h1v1h-1zM877 401h1v1h-1zM877 402h1v1h-1z"/>
<rect x="1040" y="396" width="31" height="21" fill="#fff"/>
<rect x="1040" y="396" width="31" height="1" fill="#000"/>
<rect x="1040" y="416" width="31" height="1" fill="#000"/>
<rect x="1040" y="396" width="1" height="21" fill="#000"/>
<rect x="1070" y="396" width="1" height="21" fill="#000"/>
<rect x="1037" y="403" width="7" height="7" fill="#008000"/>
<path fill="#000" d="M1049 400h1v1h-1zM1050 400h1v1h-1zM1051 400h1v1h-1zM1048 401h1v1h-1zM1052 401h1v1h-1zM1047 402h1v1h-1zM1053 402h1v1h-1zM1047 403h1v1h-1zM1053 403h1v1h-1zM1052 404h1v1h-1zM1049 405h1v1h-1zM1050 405h1v1h-1zM1051 405h1v1h-1zM1052 406h1v1h-1zM1053 407h1v1h-1zM1047 408h1v1h-1zM1053 408h1v1h-1zM1047 409h1v1h-1zM1053 409h1v1h-1zM1048 410h1v1h-1zM1052 410h1v1h-1zM1049 411h1v1h-1zM1050 411h1v1h-1zM1051 411h1v1h-1z"/>
</g>
</svg>

</body></html>
